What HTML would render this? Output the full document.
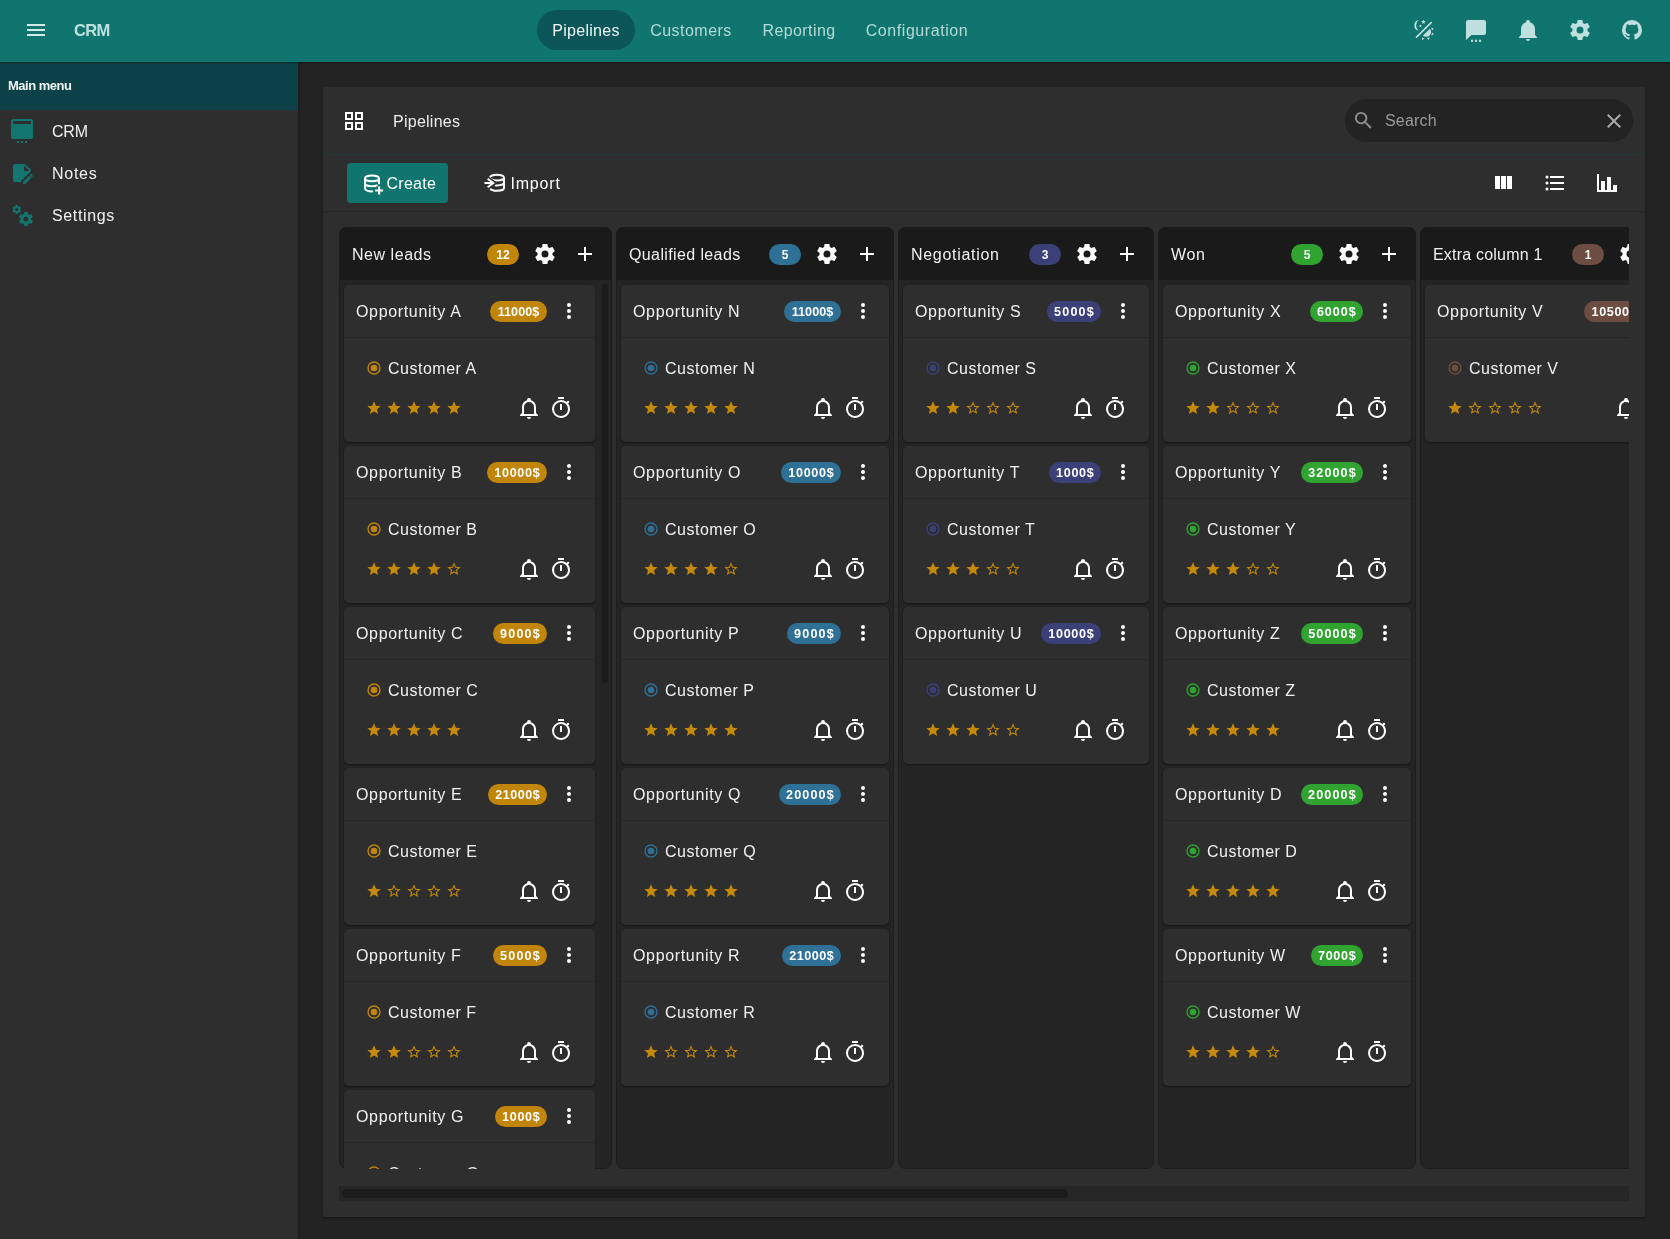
<!DOCTYPE html>
<html lang="en"><head><meta charset="utf-8"><title>CRM</title>
<style>
*{box-sizing:border-box;margin:0;padding:0}
html,body{width:1670px;height:1239px;overflow:hidden;background:#232323;font-family:"Liberation Sans",sans-serif;font-size:16px;color:#f1f1f1}
svg{display:block;flex:none}
.top,.side,.panel{will-change:transform}
.top{position:absolute;left:0;top:0;width:1670px;height:62px;background:#10756e;box-shadow:0 1px 2px rgba(0,0,0,.4);z-index:5;color:#bfe0de}
.top .menu{position:absolute;left:24px;top:18px;color:#d6ebe9}
.brand{position:absolute;left:74px;top:0;line-height:61px;font-size:16.5px;font-weight:700;color:#bfe0de;letter-spacing:-.7px}
.nav{position:absolute;left:537px;top:10px;height:40px;display:flex;color:#b4dad7}
.nav span{display:block;height:40px;line-height:42px;padding:0;text-align:center;border-radius:20px;white-space:nowrap}
.nav .active{background:#0c5559;color:#eef7f6}
.tools{position:absolute;left:1412px;top:18px;display:flex;gap:28px;color:#bfe0de}
.side{position:absolute;left:0;top:62px;width:298px;height:1177px;background:#2e2e2e;z-index:4;box-shadow:1px 0 3px rgba(0,0,0,.25)}
.sidehead{height:48px;line-height:47px;background:#0b4147;padding-left:8px;font-size:13px;font-weight:700;color:#f3f6f6;letter-spacing:-.5px}
.item{position:absolute;left:0;width:298px;height:42px;line-height:44px}
.item svg{position:absolute;left:10px;top:9px;color:#13756f}
.item span{position:absolute;left:52px;top:0;letter-spacing:.43px}
.panel{position:absolute;left:323px;top:87px;width:1322px;height:1130px;background:#2e2e2e;border-radius:3px;box-shadow:0 1px 3px rgba(0,0,0,.4)}
.titlerow{position:absolute;left:0;top:0;width:100%;height:68px;border-bottom:1px solid #24373b}
.gridic{position:absolute;left:19px;top:22px;color:#fff}
.ptitle{position:absolute;left:70px;top:0;line-height:70px;letter-spacing:.25px;color:#ececec}
.search{position:absolute;left:1022px;top:12px;width:288px;height:43px;border-radius:22px;background:#232323;color:#9c9c9c}
.search .mag{position:absolute;left:7px;top:9.5px;width:23px;height:23px;color:#8f8f8f}
.search span{position:absolute;left:40px;top:0;line-height:44px;letter-spacing:.2px}
.search .clr{position:absolute;left:257px;top:9.5px;color:#a9a9a9}
.toolbar{position:absolute;left:0;top:68px;width:100%;height:57px;border-bottom:1px solid #262626}
.btn{position:absolute;top:8px;height:40px;border-radius:4px;color:#fff}
.btn span{position:absolute;top:0;line-height:42px}
.create{left:24px;width:101px;background:#10756e}
.create svg{position:absolute;left:15px;top:8.5px}
.create span{left:39.5px;letter-spacing:.28px}
.import{left:146px;width:110px}
.import svg{position:absolute;left:14px;top:8px}
.import span{left:41.5px;letter-spacing:.8px}
.views{position:absolute;left:1168px;top:16px;display:flex;gap:28px;color:#fff}
.board{position:absolute;left:16px;top:140px;width:1290px;height:975px;overflow:hidden}
.cols{position:absolute;left:0;top:0;width:1290px;height:942px}
.col{position:absolute;top:0;height:942px;background:#242424;border-radius:8px;overflow:hidden;box-shadow:inset 0 0 0 1px rgba(0,0,0,.18)}
.colhead{position:absolute;left:0;top:0;width:100%;height:53px;background:#1a1a1a}
.coltitle{position:absolute;left:13px;top:0;line-height:56px;white-space:nowrap;letter-spacing:.45px}
.chip{display:block;height:21px;line-height:23px;border-radius:10.5px;font-size:12px;font-weight:700;color:#fff;text-align:center;white-space:nowrap}
.cnt{position:absolute;right:93px;top:17px;width:32px}
.hcog{position:absolute;right:55.5px;top:15px;color:#fff}
.hplus{position:absolute;right:15px;top:15px;color:#fff}
.colbody{position:absolute;left:5px;right:5px;top:58px}
.hasscroll .colbody{right:17px}
.vthumb{position:absolute;left:263px;top:57px;width:6px;height:399px;border-radius:3px;background:#1b1b1b}
.card{position:relative;height:157px;margin-bottom:4px;background:#2e2e2e;border-radius:5px;box-shadow:0 1px 2px rgba(0,0,0,.45)}
.chead{position:absolute;left:0;top:0;width:100%;height:53px;border-bottom:1px solid #262626}
.ctitle{position:absolute;left:12px;top:0;line-height:53px;white-space:nowrap;letter-spacing:.66px}
.chead .chip{position:absolute;right:48px;top:16px}
.dots{position:absolute;right:14px;top:14px;color:#fff}
.cbody{position:absolute;left:0;top:53px;width:100%;height:104px}
.cust{position:absolute;left:0;top:0;width:100%}
.radio{position:absolute;left:22px;top:22px}
.cust span{position:absolute;left:44px;top:19px;line-height:24px;white-space:nowrap;letter-spacing:.5px}
.crow{position:absolute;left:0;top:0;width:100%}
.stars{position:absolute;left:22px;top:62px;display:flex;gap:4px;color:#c58a0b}
.ib{position:absolute;right:54px;top:58px;color:#fff}
.it{position:absolute;right:22px;top:57.5px;color:#fff}
.amber{background:#c08509}.blue{background:#2e7096}.indigo{background:#3b4078}.green{background:#30a331}.brown{background:#6d4c41}
.c-amber{color:#c08509}.c-blue{color:#2e7096}.c-indigo{color:#3b4078}.c-green{color:#30a331}.c-brown{color:#6d4c41}
.htrack{position:absolute;left:0;top:959px;width:1290px;height:15px;background:#262626}
.hthumb{position:absolute;left:3px;top:3px;width:726px;height:9px;border-radius:4.5px;background:#1b1b1b}

</style></head>
<body>
<header class="top">
<svg class="menu" width="24" height="24" viewBox="0 0 24 24" fill="currentColor"><path d="M3,6H21V8H3V6M3,11H21V13H3V11M3,16H21V18H3V16Z"/></svg>
<span class="brand">CRM</span>
<nav class="nav"><span class="active" style="width:98px;letter-spacing:.29px">Pipelines</span><span style="width:112px;letter-spacing:.46px">Customers</span><span style="width:104px;letter-spacing:.41px">Reporting</span><span style="width:132px;letter-spacing:.57px">Configuration</span></nav>
<div class="tools"><svg width="24" height="24" viewBox="0 0 24 24" fill="currentColor"><path d="M4.5,19.1L19.2,4.65" stroke="currentColor" stroke-width="1.6" fill="none" stroke-linecap="round"/>
<path d="M6.9,2.1A5.4,5.4 0 0,0 7.1,12.8A6.5,6.5 0 0,1 6.9,2.1Z"/>
<path d="M11.40,1.45L11.99,3.09L13.73,3.14L12.35,4.21L12.84,5.88L11.40,4.90L9.96,5.88L10.45,4.21L9.07,3.14L10.81,3.09Z"/><path d="M8.40,6.30L8.82,7.42L10.02,7.47L9.08,8.22L9.40,9.38L8.40,8.72L7.40,9.38L7.72,8.22L6.78,7.47L7.98,7.42Z"/>
<path d="M17.86,10.64A4.9,4.9 0 0,1 10.94,17.56Z"/>
<path d="M21.72,10.21L20.34,12.52L19.03,10.05ZM21.90,16.60L19.28,17.20L20.16,14.54ZM16.88,21.91L14.85,20.14L17.52,19.29ZM10.10,22.01L9.96,19.32L12.42,20.66Z"/></svg><svg width="24" height="24" viewBox="0 0 24 24" fill="currentColor"><path d="M4,2H20A2,2 0 0,1 22,4V15A2,2 0 0,1 20,17H7.5L2,22V4A2,2 0 0,1 4,2Z"/>
<rect x="7" y="21.7" width="2.1" height="2.2"/><rect x="11" y="21.7" width="2.1" height="2.2"/><rect x="15" y="21.7" width="2.1" height="2.2"/></svg><svg width="24" height="24" viewBox="0 0 24 24" fill="currentColor"><path d="M21,19V20H3V19L5,17V11C5,7.9 7.03,5.17 10,4.29C10,4.19 10,4.1 10,4A2,2 0 0,1 12,2A2,2 0 0,1 14,4C14,4.1 14,4.19 14,4.29C16.97,5.17 19,7.9 19,11V17L21,19M14,21A2,2 0 0,1 12,23A2,2 0 0,1 10,21"/></svg><svg width="24" height="24" viewBox="0 0 24 24" fill="currentColor"><path d="M12,15.5A3.5,3.5 0 0,1 8.5,12A3.5,3.5 0 0,1 12,8.5A3.5,3.5 0 0,1 15.5,12A3.5,3.5 0 0,1 12,15.5M19.43,12.97C19.47,12.65 19.5,12.33 19.5,12C19.5,11.67 19.47,11.34 19.43,11L21.54,9.37C21.73,9.22 21.78,8.95 21.66,8.73L19.66,5.27C19.54,5.05 19.27,4.96 19.05,5.05L16.56,6.05C16.04,5.66 15.5,5.32 14.87,5.07L14.5,2.42C14.46,2.18 14.25,2 14,2H10C9.75,2 9.54,2.18 9.5,2.42L9.13,5.07C8.5,5.32 7.96,5.66 7.44,6.05L4.95,5.05C4.73,4.96 4.46,5.05 4.34,5.27L2.34,8.73C2.21,8.95 2.27,9.22 2.46,9.37L4.57,11C4.53,11.34 4.5,11.67 4.5,12C4.5,12.33 4.53,12.65 4.57,12.97L2.46,14.63C2.27,14.78 2.21,15.05 2.34,15.27L4.34,18.73C4.46,18.95 4.73,19.03 4.95,18.95L7.44,17.94C7.96,18.34 8.5,18.68 9.13,18.93L9.5,21.58C9.54,21.82 9.75,22 10,22H14C14.25,22 14.46,21.82 14.5,21.58L14.87,18.93C15.5,18.67 16.04,18.34 16.56,17.94L19.05,18.95C19.27,19.03 19.54,18.95 19.66,18.73L21.66,15.27C21.78,15.05 21.73,14.78 21.54,14.63L19.43,12.97Z"/></svg><svg width="24" height="24" viewBox="0 0 24 24" fill="currentColor"><path d="M12,2A10,10 0 0,0 2,12C2,16.42 4.87,20.17 8.84,21.5C9.34,21.58 9.5,21.27 9.5,21C9.5,20.77 9.5,20.14 9.5,19.31C6.73,19.91 6.14,17.97 6.14,17.97C5.68,16.81 5.03,16.5 5.03,16.5C4.12,15.88 5.1,15.9 5.1,15.9C6.1,15.97 6.63,16.93 6.63,16.93C7.5,18.45 8.97,18 9.54,17.76C9.63,17.11 9.89,16.67 10.17,16.42C7.95,16.17 5.62,15.31 5.62,11.5C5.62,10.39 6,9.5 6.65,8.79C6.55,8.54 6.2,7.5 6.75,6.15C6.75,6.15 7.59,5.88 9.5,7.17C10.29,6.95 11.15,6.84 12,6.84C12.85,6.84 13.71,6.95 14.5,7.17C16.41,5.88 17.25,6.15 17.25,6.15C17.8,7.5 17.45,8.54 17.35,8.79C18,9.5 18.38,10.39 18.38,11.5C18.38,15.32 16.04,16.16 13.81,16.41C14.17,16.72 14.5,17.33 14.5,18.26C14.5,19.6 14.5,20.68 14.5,21C14.5,21.27 14.66,21.59 15.17,21.5C19.14,20.16 22,16.42 22,12A10,10 0 0,0 12,2Z"/></svg></div>
</header>
<aside class="side">
<div class="sidehead">Main menu</div>
<div class="item" style="top:48px"><svg width="24" height="28" viewBox="0 0 24 28" fill="currentColor" style="top:7px"><path d="M21 2H3C1.9 2 1 2.9 1 4V20C1 21.1 1.9 22 3 22H21C22.1 22 23 21.1 23 20V4C23 2.9 22.1 2 21 2M21 7H3V4H21V7Z"/><rect x="7" y="24" width="2" height="2"/><rect x="11" y="24" width="2" height="2"/><rect x="15" y="24" width="2" height="2"/></svg><span style="letter-spacing:-.2px">CRM</span></div>
<div class="item" style="top:90px"><svg width="24" height="24" viewBox="0 0 24 24" fill="currentColor"><path d="M21 13.1C20.9 13.1 20.7 13.2 20.6 13.3L19.6 14.3L21.7 16.4L22.7 15.4C22.9 15.2 22.9 14.8 22.7 14.6L21.4 13.3C21.3 13.2 21.2 13.1 21 13.1M19.1 14.9L13 20.9V23H15.1L21.2 16.9L19.1 14.9M21 9L15 3H5C3.9 3 3 3.9 3 5V19C3 20.1 3.9 21 5 21H11V20.1L21 10.1V9M14 10V4.5L19.5 10H14Z"/></svg><span style="letter-spacing:.73px">Notes</span></div>
<div class="item" style="top:132px"><svg width="24" height="24" viewBox="0 0 24 24" fill="currentColor"><path d="M15.9,18.45C17.25,18.45 18.35,17.35 18.35,16C18.35,14.65 17.25,13.55 15.9,13.55C14.54,13.55 13.45,14.65 13.45,16C13.45,17.35 14.54,18.45 15.9,18.45M21.1,16.68L22.58,17.84C22.71,17.95 22.75,18.13 22.66,18.29L21.26,20.71C21.17,20.86 21,20.92 20.83,20.86L19.09,20.16C18.73,20.44 18.33,20.67 17.91,20.85L17.64,22.7C17.62,22.87 17.47,23 17.3,23H14.5C14.32,23 14.18,22.87 14.15,22.7L13.89,20.85C13.46,20.67 13.07,20.44 12.71,20.16L10.96,20.86C10.81,20.92 10.62,20.86 10.54,20.71L9.14,18.29C9.05,18.13 9.09,17.95 9.22,17.84L10.7,16.68L10.65,16L10.7,15.31L9.22,14.16C9.09,14.05 9.05,13.86 9.14,13.71L10.54,11.29C10.62,11.13 10.81,11.07 10.96,11.13L12.71,11.84C13.07,11.56 13.46,11.32 13.89,11.15L14.15,9.29C14.18,9.13 14.32,9 14.5,9H17.3C17.47,9 17.62,9.13 17.64,9.29L17.91,11.15C18.33,11.32 18.73,11.56 19.09,11.84L20.83,11.13C21,11.07 21.17,11.13 21.26,11.29L22.66,13.71C22.75,13.86 22.71,14.05 22.58,14.16L21.1,15.31L21.15,16L21.1,16.68M6.69,8.07C7.56,8.07 8.26,7.37 8.26,6.5C8.26,5.63 7.56,4.92 6.69,4.92A1.58,1.58 0 0,0 5.11,6.5C5.11,7.37 5.82,8.07 6.69,8.07M10.03,6.94L11,7.68C11.07,7.75 11.09,7.87 11.03,7.97L10.13,9.53C10.08,9.63 9.96,9.67 9.86,9.63L8.74,9.18L8,9.62L7.81,10.81C7.79,10.92 7.7,11 7.59,11H5.79C5.67,11 5.58,10.92 5.56,10.81L5.4,9.62L4.64,9.18L3.5,9.63C3.41,9.67 3.3,9.63 3.24,9.53L2.34,7.97C2.28,7.87 2.31,7.75 2.39,7.68L3.34,6.94L3.31,6.5L3.34,6.06L2.39,5.32C2.31,5.25 2.28,5.13 2.34,5.03L3.24,3.47C3.3,3.37 3.41,3.33 3.5,3.37L4.63,3.82L5.4,3.38L5.56,2.19C5.58,2.08 5.67,2 5.79,2H7.59C7.7,2 7.79,2.08 7.81,2.19L8,3.38L8.74,3.82L9.86,3.37C9.96,3.33 10.08,3.37 10.13,3.47L11.03,5.03C11.09,5.13 11.07,5.25 11,5.32L10.03,6.06L10.06,6.5L10.03,6.94Z"/></svg><span style="letter-spacing:.65px">Settings</span></div>
</aside>
<main class="panel">
<div class="titlerow"><svg class="gridic" width="24" height="24" viewBox="0 0 24 24" fill="currentColor"><path d="M3 11h8V3H3m2 2h4v4H5m8 12h8v-8h-8m2 2h4v4h-4M3 21h8v-8H3m2 2h4v4H5m8-16v8h8V3m-2 6h-4V5h4z"/></svg><span class="ptitle">Pipelines</span>
<div class="search"><svg class="mag" width="24" height="24" viewBox="0 0 24 24" fill="currentColor"><path d="M9.5,3A6.5,6.5 0 0,1 16,9.5C16,11.11 15.41,12.59 14.44,13.73L14.71,14H15.5L20.5,19L19,20.5L14,15.5V14.71L13.73,14.44C12.59,15.41 11.11,16 9.5,16A6.5,6.5 0 0,1 3,9.5A6.5,6.5 0 0,1 9.5,3M9.5,5C7,5 5,7 5,9.5C5,12 7,14 9.5,14C12,14 14,12 14,9.5C14,7 12,5 9.5,5Z"/></svg><span>Search</span><svg class="clr" width="24" height="24" viewBox="0 0 24 24" fill="currentColor"><path d="M19,6.41L17.59,5L12,10.59L6.41,5L5,6.41L10.59,12L5,17.59L6.41,19L12,13.41L17.59,19L19,17.59L13.41,12L19,6.41Z"/></svg></div></div>
<div class="toolbar"><div class="btn create"><svg width="24" height="24" viewBox="0 0 24 24" fill="none" stroke="currentColor" stroke-width="1.9"><ellipse cx="10" cy="6.4" rx="7" ry="2.9"/><path d="M3,6.4V16.5c0,1.6 3.1,2.95 7,2.95c.4,0 .8,-.01 1.1,-.04M17,6.4V12.3M3,11.4c0,1.6 3.1,2.9 7,2.9c2.2,0 4.2,-.45 5.5,-1.1"/><path d="M17.1,14.5v8M13.1,18.5h8" stroke-width="2.2"/></svg><span>Create</span></div><div class="btn import"><svg width="24" height="24" viewBox="0 0 24 24" fill="none" stroke="currentColor" stroke-width="1.9"><ellipse cx="14" cy="6.65" rx="7" ry="2.9"/><path d="M21,6.65V16.9M7.2,17.5c.7,1.35 3.4,2.3 6.8,2.3c3.9,0 7,-1.3 7,-2.9M11.8,14.35c.7,.1 1.4,.15 2.2,.15c3.9,0 7,-1.3 7,-2.9"/><path d="M4.6,7.8L10.4,12L4.6,16.3" stroke="#2e2e2e" stroke-width="5"/><path d="M1.5,12H10M4.6,7.8L10.4,12L4.6,16.3"/></svg>
<span>Import</span></div>
<div class="views"><svg width="24" height="24" viewBox="0 0 24 24" fill="currentColor"><path d="M16,5V18H21V5M4,18H9V5H4M10,18H15V5H10V18Z"/></svg><svg width="24" height="24" viewBox="0 0 24 24" fill="currentColor"><path d="M7,5H21V7H7V5M7,13V11H21V13H7M4,4.5A1.5,1.5 0 0,1 5.5,6A1.5,1.5 0 0,1 4,7.5A1.5,1.5 0 0,1 2.5,6A1.5,1.5 0 0,1 4,4.5M4,10.5A1.5,1.5 0 0,1 5.5,12A1.5,1.5 0 0,1 4,13.5A1.5,1.5 0 0,1 2.5,12A1.5,1.5 0 0,1 4,10.5M7,19V17H21V19H7M4,16.5A1.5,1.5 0 0,1 5.5,18A1.5,1.5 0 0,1 4,19.5A1.5,1.5 0 0,1 2.5,18A1.5,1.5 0 0,1 4,16.5Z"/></svg><svg width="24" height="24" viewBox="0 0 24 24" fill="currentColor"><path d="M22,21H2V3H4V19H6V10H10V19H12V6H16V19H18V14H22V21Z"/></svg></div></div>
<div class="board">
<div class="cols">
<div class="col hasscroll" style="left:0px;width:273px">
<div class="colhead"><span class="coltitle" style="letter-spacing:0.54px">New leads</span><span class="chip amber cnt">12</span><svg class="hcog" width="24" height="24" viewBox="0 0 24 24" fill="currentColor"><path d="M12,15.5A3.5,3.5 0 0,1 8.5,12A3.5,3.5 0 0,1 12,8.5A3.5,3.5 0 0,1 15.5,12A3.5,3.5 0 0,1 12,15.5M19.43,12.97C19.47,12.65 19.5,12.33 19.5,12C19.5,11.67 19.47,11.34 19.43,11L21.54,9.37C21.73,9.22 21.78,8.95 21.66,8.73L19.66,5.27C19.54,5.05 19.27,4.96 19.05,5.05L16.56,6.05C16.04,5.66 15.5,5.32 14.87,5.07L14.5,2.42C14.46,2.18 14.25,2 14,2H10C9.75,2 9.54,2.18 9.5,2.42L9.13,5.07C8.5,5.32 7.96,5.66 7.44,6.05L4.95,5.05C4.73,4.96 4.46,5.05 4.34,5.27L2.34,8.73C2.21,8.95 2.27,9.22 2.46,9.37L4.57,11C4.53,11.34 4.5,11.67 4.5,12C4.5,12.33 4.53,12.65 4.57,12.97L2.46,14.63C2.27,14.78 2.21,15.05 2.34,15.27L4.34,18.73C4.46,18.95 4.73,19.03 4.95,18.95L7.44,17.94C7.96,18.34 8.5,18.68 9.13,18.93L9.5,21.58C9.54,21.82 9.75,22 10,22H14C14.25,22 14.46,21.82 14.5,21.58L14.87,18.93C15.5,18.67 16.04,18.34 16.56,17.94L19.05,18.95C19.27,19.03 19.54,18.95 19.66,18.73L21.66,15.27C21.78,15.05 21.73,14.78 21.54,14.63L19.43,12.97Z"/></svg><svg class="hplus" width="24" height="24" viewBox="0 0 24 24" fill="currentColor"><path d="M19,13H13V19H11V13H5V11H11V5H13V11H19V13Z"/></svg></div>
<div class="colbody">
<div class="card">
<div class="chead"><span class="ctitle">Opportunity A</span><span class="chip amber" style="width:57px;font-size:12.6px;letter-spacing:0.07px;padding-left:0.07px">11000$</span><svg class="dots" width="24" height="24" viewBox="0 0 24 24" fill="currentColor"><path d="M12,16A2,2 0 0,1 14,18A2,2 0 0,1 12,20A2,2 0 0,1 10,18A2,2 0 0,1 12,16M12,10A2,2 0 0,1 14,12A2,2 0 0,1 12,14A2,2 0 0,1 10,12A2,2 0 0,1 12,10M12,4A2,2 0 0,1 14,6A2,2 0 0,1 12,8A2,2 0 0,1 10,6A2,2 0 0,1 12,4Z"/></svg></div>
<div class="cbody"><div class="cust"><svg class="radio c-amber" width="16" height="16" viewBox="0 0 24 24" fill="currentColor"><path d="M12,20A8,8 0 0,1 4,12A8,8 0 0,1 12,4A8,8 0 0,1 20,12A8,8 0 0,1 12,20M12,2A10,10 0 0,0 2,12A10,10 0 0,0 12,22A10,10 0 0,0 22,12A10,10 0 0,0 12,2M12,7A5,5 0 0,0 7,12A5,5 0 0,0 12,17A5,5 0 0,0 17,12A5,5 0 0,0 12,7Z"/></svg><span>Customer A</span></div>
<div class="crow"><div class="stars"><svg class="st" width="16" height="16" viewBox="0 0 24 24" fill="currentColor"><path d="M12,17.27L18.18,21L16.54,13.97L22,9.24L14.81,8.62L12,2L9.19,8.62L2,9.24L7.45,13.97L5.82,21L12,17.27Z"/></svg><svg class="st" width="16" height="16" viewBox="0 0 24 24" fill="currentColor"><path d="M12,17.27L18.18,21L16.54,13.97L22,9.24L14.81,8.62L12,2L9.19,8.62L2,9.24L7.45,13.97L5.82,21L12,17.27Z"/></svg><svg class="st" width="16" height="16" viewBox="0 0 24 24" fill="currentColor"><path d="M12,17.27L18.18,21L16.54,13.97L22,9.24L14.81,8.62L12,2L9.19,8.62L2,9.24L7.45,13.97L5.82,21L12,17.27Z"/></svg><svg class="st" width="16" height="16" viewBox="0 0 24 24" fill="currentColor"><path d="M12,17.27L18.18,21L16.54,13.97L22,9.24L14.81,8.62L12,2L9.19,8.62L2,9.24L7.45,13.97L5.82,21L12,17.27Z"/></svg><svg class="st" width="16" height="16" viewBox="0 0 24 24" fill="currentColor"><path d="M12,17.27L18.18,21L16.54,13.97L22,9.24L14.81,8.62L12,2L9.19,8.62L2,9.24L7.45,13.97L5.82,21L12,17.27Z"/></svg></div><svg class="ib" width="24" height="24" viewBox="0 0 24 24" fill="currentColor"><path d="M10,21H14A2,2 0 0,1 12,23A2,2 0 0,1 10,21M21,19V20H3V19L5,17V11C5,7.9 7.03,5.17 10,4.29C10,4.19 10,4.1 10,4A2,2 0 0,1 12,2A2,2 0 0,1 14,4C14,4.1 14,4.19 14,4.29C16.97,5.17 19,7.9 19,11V17L21,19M17,11A5,5 0 0,0 12,6A5,5 0 0,0 7,11V18H17V11Z"/></svg><svg class="it" width="24" height="24" viewBox="0 0 24 24" fill="currentColor"><path d="M12,20A7,7 0 0,1 5,13A7,7 0 0,1 12,6A7,7 0 0,1 19,13A7,7 0 0,1 12,20M19.03,7.39L20.45,5.97C20,5.46 19.55,5 19.04,4.56L17.62,6C16.07,4.74 14.12,4 12,4A9,9 0 0,0 3,13A9,9 0 0,0 12,22C17,22 21,17.97 21,13C21,10.88 20.26,8.93 19.03,7.39M11,14H13V8H11M15,1H9V3H15V1Z"/></svg></div></div>
</div>
<div class="card">
<div class="chead"><span class="ctitle">Opportunity B</span><span class="chip amber" style="width:60px;font-size:12.6px;letter-spacing:0.67px;padding-left:0.67px">10000$</span><svg class="dots" width="24" height="24" viewBox="0 0 24 24" fill="currentColor"><path d="M12,16A2,2 0 0,1 14,18A2,2 0 0,1 12,20A2,2 0 0,1 10,18A2,2 0 0,1 12,16M12,10A2,2 0 0,1 14,12A2,2 0 0,1 12,14A2,2 0 0,1 10,12A2,2 0 0,1 12,10M12,4A2,2 0 0,1 14,6A2,2 0 0,1 12,8A2,2 0 0,1 10,6A2,2 0 0,1 12,4Z"/></svg></div>
<div class="cbody"><div class="cust"><svg class="radio c-amber" width="16" height="16" viewBox="0 0 24 24" fill="currentColor"><path d="M12,20A8,8 0 0,1 4,12A8,8 0 0,1 12,4A8,8 0 0,1 20,12A8,8 0 0,1 12,20M12,2A10,10 0 0,0 2,12A10,10 0 0,0 12,22A10,10 0 0,0 22,12A10,10 0 0,0 12,2M12,7A5,5 0 0,0 7,12A5,5 0 0,0 12,17A5,5 0 0,0 17,12A5,5 0 0,0 12,7Z"/></svg><span>Customer B</span></div>
<div class="crow"><div class="stars"><svg class="st" width="16" height="16" viewBox="0 0 24 24" fill="currentColor"><path d="M12,17.27L18.18,21L16.54,13.97L22,9.24L14.81,8.62L12,2L9.19,8.62L2,9.24L7.45,13.97L5.82,21L12,17.27Z"/></svg><svg class="st" width="16" height="16" viewBox="0 0 24 24" fill="currentColor"><path d="M12,17.27L18.18,21L16.54,13.97L22,9.24L14.81,8.62L12,2L9.19,8.62L2,9.24L7.45,13.97L5.82,21L12,17.27Z"/></svg><svg class="st" width="16" height="16" viewBox="0 0 24 24" fill="currentColor"><path d="M12,17.27L18.18,21L16.54,13.97L22,9.24L14.81,8.62L12,2L9.19,8.62L2,9.24L7.45,13.97L5.82,21L12,17.27Z"/></svg><svg class="st" width="16" height="16" viewBox="0 0 24 24" fill="currentColor"><path d="M12,17.27L18.18,21L16.54,13.97L22,9.24L14.81,8.62L12,2L9.19,8.62L2,9.24L7.45,13.97L5.82,21L12,17.27Z"/></svg><svg class="st" width="16" height="16" viewBox="0 0 24 24" fill="currentColor"><path d="M12,15.39L8.24,17.66L9.23,13.38L5.91,10.5L10.29,10.13L12,6.09L13.71,10.13L18.09,10.5L14.77,13.38L15.76,17.66M22,9.24L14.81,8.63L12,2L9.19,8.63L2,9.24L7.45,13.97L5.82,21L12,17.27L18.18,21L16.54,13.97L22,9.24Z"/></svg></div><svg class="ib" width="24" height="24" viewBox="0 0 24 24" fill="currentColor"><path d="M10,21H14A2,2 0 0,1 12,23A2,2 0 0,1 10,21M21,19V20H3V19L5,17V11C5,7.9 7.03,5.17 10,4.29C10,4.19 10,4.1 10,4A2,2 0 0,1 12,2A2,2 0 0,1 14,4C14,4.1 14,4.19 14,4.29C16.97,5.17 19,7.9 19,11V17L21,19M17,11A5,5 0 0,0 12,6A5,5 0 0,0 7,11V18H17V11Z"/></svg><svg class="it" width="24" height="24" viewBox="0 0 24 24" fill="currentColor"><path d="M12,20A7,7 0 0,1 5,13A7,7 0 0,1 12,6A7,7 0 0,1 19,13A7,7 0 0,1 12,20M19.03,7.39L20.45,5.97C20,5.46 19.55,5 19.04,4.56L17.62,6C16.07,4.74 14.12,4 12,4A9,9 0 0,0 3,13A9,9 0 0,0 12,22C17,22 21,17.97 21,13C21,10.88 20.26,8.93 19.03,7.39M11,14H13V8H11M15,1H9V3H15V1Z"/></svg></div></div>
</div>
<div class="card">
<div class="chead"><span class="ctitle">Opportunity C</span><span class="chip amber" style="width:54.2px;font-size:12.6px;letter-spacing:1.14px;padding-left:1.14px">9000$</span><svg class="dots" width="24" height="24" viewBox="0 0 24 24" fill="currentColor"><path d="M12,16A2,2 0 0,1 14,18A2,2 0 0,1 12,20A2,2 0 0,1 10,18A2,2 0 0,1 12,16M12,10A2,2 0 0,1 14,12A2,2 0 0,1 12,14A2,2 0 0,1 10,12A2,2 0 0,1 12,10M12,4A2,2 0 0,1 14,6A2,2 0 0,1 12,8A2,2 0 0,1 10,6A2,2 0 0,1 12,4Z"/></svg></div>
<div class="cbody"><div class="cust"><svg class="radio c-amber" width="16" height="16" viewBox="0 0 24 24" fill="currentColor"><path d="M12,20A8,8 0 0,1 4,12A8,8 0 0,1 12,4A8,8 0 0,1 20,12A8,8 0 0,1 12,20M12,2A10,10 0 0,0 2,12A10,10 0 0,0 12,22A10,10 0 0,0 22,12A10,10 0 0,0 12,2M12,7A5,5 0 0,0 7,12A5,5 0 0,0 12,17A5,5 0 0,0 17,12A5,5 0 0,0 12,7Z"/></svg><span>Customer C</span></div>
<div class="crow"><div class="stars"><svg class="st" width="16" height="16" viewBox="0 0 24 24" fill="currentColor"><path d="M12,17.27L18.18,21L16.54,13.97L22,9.24L14.81,8.62L12,2L9.19,8.62L2,9.24L7.45,13.97L5.82,21L12,17.27Z"/></svg><svg class="st" width="16" height="16" viewBox="0 0 24 24" fill="currentColor"><path d="M12,17.27L18.18,21L16.54,13.97L22,9.24L14.81,8.62L12,2L9.19,8.62L2,9.24L7.45,13.97L5.82,21L12,17.27Z"/></svg><svg class="st" width="16" height="16" viewBox="0 0 24 24" fill="currentColor"><path d="M12,17.27L18.18,21L16.54,13.97L22,9.24L14.81,8.62L12,2L9.19,8.62L2,9.24L7.45,13.97L5.82,21L12,17.27Z"/></svg><svg class="st" width="16" height="16" viewBox="0 0 24 24" fill="currentColor"><path d="M12,17.27L18.18,21L16.54,13.97L22,9.24L14.81,8.62L12,2L9.19,8.62L2,9.24L7.45,13.97L5.82,21L12,17.27Z"/></svg><svg class="st" width="16" height="16" viewBox="0 0 24 24" fill="currentColor"><path d="M12,17.27L18.18,21L16.54,13.97L22,9.24L14.81,8.62L12,2L9.19,8.62L2,9.24L7.45,13.97L5.82,21L12,17.27Z"/></svg></div><svg class="ib" width="24" height="24" viewBox="0 0 24 24" fill="currentColor"><path d="M10,21H14A2,2 0 0,1 12,23A2,2 0 0,1 10,21M21,19V20H3V19L5,17V11C5,7.9 7.03,5.17 10,4.29C10,4.19 10,4.1 10,4A2,2 0 0,1 12,2A2,2 0 0,1 14,4C14,4.1 14,4.19 14,4.29C16.97,5.17 19,7.9 19,11V17L21,19M17,11A5,5 0 0,0 12,6A5,5 0 0,0 7,11V18H17V11Z"/></svg><svg class="it" width="24" height="24" viewBox="0 0 24 24" fill="currentColor"><path d="M12,20A7,7 0 0,1 5,13A7,7 0 0,1 12,6A7,7 0 0,1 19,13A7,7 0 0,1 12,20M19.03,7.39L20.45,5.97C20,5.46 19.55,5 19.04,4.56L17.62,6C16.07,4.74 14.12,4 12,4A9,9 0 0,0 3,13A9,9 0 0,0 12,22C17,22 21,17.97 21,13C21,10.88 20.26,8.93 19.03,7.39M11,14H13V8H11M15,1H9V3H15V1Z"/></svg></div></div>
</div>
<div class="card">
<div class="chead"><span class="ctitle">Opportunity E</span><span class="chip amber" style="width:59px;font-size:12.6px;letter-spacing:0.47px;padding-left:0.47px">21000$</span><svg class="dots" width="24" height="24" viewBox="0 0 24 24" fill="currentColor"><path d="M12,16A2,2 0 0,1 14,18A2,2 0 0,1 12,20A2,2 0 0,1 10,18A2,2 0 0,1 12,16M12,10A2,2 0 0,1 14,12A2,2 0 0,1 12,14A2,2 0 0,1 10,12A2,2 0 0,1 12,10M12,4A2,2 0 0,1 14,6A2,2 0 0,1 12,8A2,2 0 0,1 10,6A2,2 0 0,1 12,4Z"/></svg></div>
<div class="cbody"><div class="cust"><svg class="radio c-amber" width="16" height="16" viewBox="0 0 24 24" fill="currentColor"><path d="M12,20A8,8 0 0,1 4,12A8,8 0 0,1 12,4A8,8 0 0,1 20,12A8,8 0 0,1 12,20M12,2A10,10 0 0,0 2,12A10,10 0 0,0 12,22A10,10 0 0,0 22,12A10,10 0 0,0 12,2M12,7A5,5 0 0,0 7,12A5,5 0 0,0 12,17A5,5 0 0,0 17,12A5,5 0 0,0 12,7Z"/></svg><span>Customer E</span></div>
<div class="crow"><div class="stars"><svg class="st" width="16" height="16" viewBox="0 0 24 24" fill="currentColor"><path d="M12,17.27L18.18,21L16.54,13.97L22,9.24L14.81,8.62L12,2L9.19,8.62L2,9.24L7.45,13.97L5.82,21L12,17.27Z"/></svg><svg class="st" width="16" height="16" viewBox="0 0 24 24" fill="currentColor"><path d="M12,15.39L8.24,17.66L9.23,13.38L5.91,10.5L10.29,10.13L12,6.09L13.71,10.13L18.09,10.5L14.77,13.38L15.76,17.66M22,9.24L14.81,8.63L12,2L9.19,8.63L2,9.24L7.45,13.97L5.82,21L12,17.27L18.18,21L16.54,13.97L22,9.24Z"/></svg><svg class="st" width="16" height="16" viewBox="0 0 24 24" fill="currentColor"><path d="M12,15.39L8.24,17.66L9.23,13.38L5.91,10.5L10.29,10.13L12,6.09L13.71,10.13L18.09,10.5L14.77,13.38L15.76,17.66M22,9.24L14.81,8.63L12,2L9.19,8.63L2,9.24L7.45,13.97L5.82,21L12,17.27L18.18,21L16.54,13.97L22,9.24Z"/></svg><svg class="st" width="16" height="16" viewBox="0 0 24 24" fill="currentColor"><path d="M12,15.39L8.24,17.66L9.23,13.38L5.91,10.5L10.29,10.13L12,6.09L13.71,10.13L18.09,10.5L14.77,13.38L15.76,17.66M22,9.24L14.81,8.63L12,2L9.19,8.63L2,9.24L7.45,13.97L5.82,21L12,17.27L18.18,21L16.54,13.97L22,9.24Z"/></svg><svg class="st" width="16" height="16" viewBox="0 0 24 24" fill="currentColor"><path d="M12,15.39L8.24,17.66L9.23,13.38L5.91,10.5L10.29,10.13L12,6.09L13.71,10.13L18.09,10.5L14.77,13.38L15.76,17.66M22,9.24L14.81,8.63L12,2L9.19,8.63L2,9.24L7.45,13.97L5.82,21L12,17.27L18.18,21L16.54,13.97L22,9.24Z"/></svg></div><svg class="ib" width="24" height="24" viewBox="0 0 24 24" fill="currentColor"><path d="M10,21H14A2,2 0 0,1 12,23A2,2 0 0,1 10,21M21,19V20H3V19L5,17V11C5,7.9 7.03,5.17 10,4.29C10,4.19 10,4.1 10,4A2,2 0 0,1 12,2A2,2 0 0,1 14,4C14,4.1 14,4.19 14,4.29C16.97,5.17 19,7.9 19,11V17L21,19M17,11A5,5 0 0,0 12,6A5,5 0 0,0 7,11V18H17V11Z"/></svg><svg class="it" width="24" height="24" viewBox="0 0 24 24" fill="currentColor"><path d="M12,20A7,7 0 0,1 5,13A7,7 0 0,1 12,6A7,7 0 0,1 19,13A7,7 0 0,1 12,20M19.03,7.39L20.45,5.97C20,5.46 19.55,5 19.04,4.56L17.62,6C16.07,4.74 14.12,4 12,4A9,9 0 0,0 3,13A9,9 0 0,0 12,22C17,22 21,17.97 21,13C21,10.88 20.26,8.93 19.03,7.39M11,14H13V8H11M15,1H9V3H15V1Z"/></svg></div></div>
</div>
<div class="card">
<div class="chead"><span class="ctitle">Opportunity F</span><span class="chip amber" style="width:54.2px;font-size:12.6px;letter-spacing:1.14px;padding-left:1.14px">5000$</span><svg class="dots" width="24" height="24" viewBox="0 0 24 24" fill="currentColor"><path d="M12,16A2,2 0 0,1 14,18A2,2 0 0,1 12,20A2,2 0 0,1 10,18A2,2 0 0,1 12,16M12,10A2,2 0 0,1 14,12A2,2 0 0,1 12,14A2,2 0 0,1 10,12A2,2 0 0,1 12,10M12,4A2,2 0 0,1 14,6A2,2 0 0,1 12,8A2,2 0 0,1 10,6A2,2 0 0,1 12,4Z"/></svg></div>
<div class="cbody"><div class="cust"><svg class="radio c-amber" width="16" height="16" viewBox="0 0 24 24" fill="currentColor"><path d="M12,20A8,8 0 0,1 4,12A8,8 0 0,1 12,4A8,8 0 0,1 20,12A8,8 0 0,1 12,20M12,2A10,10 0 0,0 2,12A10,10 0 0,0 12,22A10,10 0 0,0 22,12A10,10 0 0,0 12,2M12,7A5,5 0 0,0 7,12A5,5 0 0,0 12,17A5,5 0 0,0 17,12A5,5 0 0,0 12,7Z"/></svg><span>Customer F</span></div>
<div class="crow"><div class="stars"><svg class="st" width="16" height="16" viewBox="0 0 24 24" fill="currentColor"><path d="M12,17.27L18.18,21L16.54,13.97L22,9.24L14.81,8.62L12,2L9.19,8.62L2,9.24L7.45,13.97L5.82,21L12,17.27Z"/></svg><svg class="st" width="16" height="16" viewBox="0 0 24 24" fill="currentColor"><path d="M12,17.27L18.18,21L16.54,13.97L22,9.24L14.81,8.62L12,2L9.19,8.62L2,9.24L7.45,13.97L5.82,21L12,17.27Z"/></svg><svg class="st" width="16" height="16" viewBox="0 0 24 24" fill="currentColor"><path d="M12,15.39L8.24,17.66L9.23,13.38L5.91,10.5L10.29,10.13L12,6.09L13.71,10.13L18.09,10.5L14.77,13.38L15.76,17.66M22,9.24L14.81,8.63L12,2L9.19,8.63L2,9.24L7.45,13.97L5.82,21L12,17.27L18.18,21L16.54,13.97L22,9.24Z"/></svg><svg class="st" width="16" height="16" viewBox="0 0 24 24" fill="currentColor"><path d="M12,15.39L8.24,17.66L9.23,13.38L5.91,10.5L10.29,10.13L12,6.09L13.71,10.13L18.09,10.5L14.77,13.38L15.76,17.66M22,9.24L14.81,8.63L12,2L9.19,8.63L2,9.24L7.45,13.97L5.82,21L12,17.27L18.18,21L16.54,13.97L22,9.24Z"/></svg><svg class="st" width="16" height="16" viewBox="0 0 24 24" fill="currentColor"><path d="M12,15.39L8.24,17.66L9.23,13.38L5.91,10.5L10.29,10.13L12,6.09L13.71,10.13L18.09,10.5L14.77,13.38L15.76,17.66M22,9.24L14.81,8.63L12,2L9.19,8.63L2,9.24L7.45,13.97L5.82,21L12,17.27L18.18,21L16.54,13.97L22,9.24Z"/></svg></div><svg class="ib" width="24" height="24" viewBox="0 0 24 24" fill="currentColor"><path d="M10,21H14A2,2 0 0,1 12,23A2,2 0 0,1 10,21M21,19V20H3V19L5,17V11C5,7.9 7.03,5.17 10,4.29C10,4.19 10,4.1 10,4A2,2 0 0,1 12,2A2,2 0 0,1 14,4C14,4.1 14,4.19 14,4.29C16.97,5.17 19,7.9 19,11V17L21,19M17,11A5,5 0 0,0 12,6A5,5 0 0,0 7,11V18H17V11Z"/></svg><svg class="it" width="24" height="24" viewBox="0 0 24 24" fill="currentColor"><path d="M12,20A7,7 0 0,1 5,13A7,7 0 0,1 12,6A7,7 0 0,1 19,13A7,7 0 0,1 12,20M19.03,7.39L20.45,5.97C20,5.46 19.55,5 19.04,4.56L17.62,6C16.07,4.74 14.12,4 12,4A9,9 0 0,0 3,13A9,9 0 0,0 12,22C17,22 21,17.97 21,13C21,10.88 20.26,8.93 19.03,7.39M11,14H13V8H11M15,1H9V3H15V1Z"/></svg></div></div>
</div>
<div class="card">
<div class="chead"><span class="ctitle">Opportunity G</span><span class="chip amber" style="width:52.2px;font-size:12.6px;letter-spacing:0.64px;padding-left:0.64px">1000$</span><svg class="dots" width="24" height="24" viewBox="0 0 24 24" fill="currentColor"><path d="M12,16A2,2 0 0,1 14,18A2,2 0 0,1 12,20A2,2 0 0,1 10,18A2,2 0 0,1 12,16M12,10A2,2 0 0,1 14,12A2,2 0 0,1 12,14A2,2 0 0,1 10,12A2,2 0 0,1 12,10M12,4A2,2 0 0,1 14,6A2,2 0 0,1 12,8A2,2 0 0,1 10,6A2,2 0 0,1 12,4Z"/></svg></div>
<div class="cbody"><div class="cust"><svg class="radio c-amber" width="16" height="16" viewBox="0 0 24 24" fill="currentColor"><path d="M12,20A8,8 0 0,1 4,12A8,8 0 0,1 12,4A8,8 0 0,1 20,12A8,8 0 0,1 12,20M12,2A10,10 0 0,0 2,12A10,10 0 0,0 12,22A10,10 0 0,0 22,12A10,10 0 0,0 12,2M12,7A5,5 0 0,0 7,12A5,5 0 0,0 12,17A5,5 0 0,0 17,12A5,5 0 0,0 12,7Z"/></svg><span>Customer G</span></div>
<div class="crow"><div class="stars"><svg class="st" width="16" height="16" viewBox="0 0 24 24" fill="currentColor"><path d="M12,17.27L18.18,21L16.54,13.97L22,9.24L14.81,8.62L12,2L9.19,8.62L2,9.24L7.45,13.97L5.82,21L12,17.27Z"/></svg><svg class="st" width="16" height="16" viewBox="0 0 24 24" fill="currentColor"><path d="M12,17.27L18.18,21L16.54,13.97L22,9.24L14.81,8.62L12,2L9.19,8.62L2,9.24L7.45,13.97L5.82,21L12,17.27Z"/></svg><svg class="st" width="16" height="16" viewBox="0 0 24 24" fill="currentColor"><path d="M12,15.39L8.24,17.66L9.23,13.38L5.91,10.5L10.29,10.13L12,6.09L13.71,10.13L18.09,10.5L14.77,13.38L15.76,17.66M22,9.24L14.81,8.63L12,2L9.19,8.63L2,9.24L7.45,13.97L5.82,21L12,17.27L18.18,21L16.54,13.97L22,9.24Z"/></svg><svg class="st" width="16" height="16" viewBox="0 0 24 24" fill="currentColor"><path d="M12,15.39L8.24,17.66L9.23,13.38L5.91,10.5L10.29,10.13L12,6.09L13.71,10.13L18.09,10.5L14.77,13.38L15.76,17.66M22,9.24L14.81,8.63L12,2L9.19,8.63L2,9.24L7.45,13.97L5.82,21L12,17.27L18.18,21L16.54,13.97L22,9.24Z"/></svg><svg class="st" width="16" height="16" viewBox="0 0 24 24" fill="currentColor"><path d="M12,15.39L8.24,17.66L9.23,13.38L5.91,10.5L10.29,10.13L12,6.09L13.71,10.13L18.09,10.5L14.77,13.38L15.76,17.66M22,9.24L14.81,8.63L12,2L9.19,8.63L2,9.24L7.45,13.97L5.82,21L12,17.27L18.18,21L16.54,13.97L22,9.24Z"/></svg></div><svg class="ib" width="24" height="24" viewBox="0 0 24 24" fill="currentColor"><path d="M10,21H14A2,2 0 0,1 12,23A2,2 0 0,1 10,21M21,19V20H3V19L5,17V11C5,7.9 7.03,5.17 10,4.29C10,4.19 10,4.1 10,4A2,2 0 0,1 12,2A2,2 0 0,1 14,4C14,4.1 14,4.19 14,4.29C16.97,5.17 19,7.9 19,11V17L21,19M17,11A5,5 0 0,0 12,6A5,5 0 0,0 7,11V18H17V11Z"/></svg><svg class="it" width="24" height="24" viewBox="0 0 24 24" fill="currentColor"><path d="M12,20A7,7 0 0,1 5,13A7,7 0 0,1 12,6A7,7 0 0,1 19,13A7,7 0 0,1 12,20M19.03,7.39L20.45,5.97C20,5.46 19.55,5 19.04,4.56L17.62,6C16.07,4.74 14.12,4 12,4A9,9 0 0,0 3,13A9,9 0 0,0 12,22C17,22 21,17.97 21,13C21,10.88 20.26,8.93 19.03,7.39M11,14H13V8H11M15,1H9V3H15V1Z"/></svg></div></div>
</div>
</div><div class="vthumb"></div>
</div><div class="col" style="left:277px;width:278px">
<div class="colhead"><span class="coltitle" style="letter-spacing:0.38px">Qualified leads</span><span class="chip blue cnt">5</span><svg class="hcog" width="24" height="24" viewBox="0 0 24 24" fill="currentColor"><path d="M12,15.5A3.5,3.5 0 0,1 8.5,12A3.5,3.5 0 0,1 12,8.5A3.5,3.5 0 0,1 15.5,12A3.5,3.5 0 0,1 12,15.5M19.43,12.97C19.47,12.65 19.5,12.33 19.5,12C19.5,11.67 19.47,11.34 19.43,11L21.54,9.37C21.73,9.22 21.78,8.95 21.66,8.73L19.66,5.27C19.54,5.05 19.27,4.96 19.05,5.05L16.56,6.05C16.04,5.66 15.5,5.32 14.87,5.07L14.5,2.42C14.46,2.18 14.25,2 14,2H10C9.75,2 9.54,2.18 9.5,2.42L9.13,5.07C8.5,5.32 7.96,5.66 7.44,6.05L4.95,5.05C4.73,4.96 4.46,5.05 4.34,5.27L2.34,8.73C2.21,8.95 2.27,9.22 2.46,9.37L4.57,11C4.53,11.34 4.5,11.67 4.5,12C4.5,12.33 4.53,12.65 4.57,12.97L2.46,14.63C2.27,14.78 2.21,15.05 2.34,15.27L4.34,18.73C4.46,18.95 4.73,19.03 4.95,18.95L7.44,17.94C7.96,18.34 8.5,18.68 9.13,18.93L9.5,21.58C9.54,21.82 9.75,22 10,22H14C14.25,22 14.46,21.82 14.5,21.58L14.87,18.93C15.5,18.67 16.04,18.34 16.56,17.94L19.05,18.95C19.27,19.03 19.54,18.95 19.66,18.73L21.66,15.27C21.78,15.05 21.73,14.78 21.54,14.63L19.43,12.97Z"/></svg><svg class="hplus" width="24" height="24" viewBox="0 0 24 24" fill="currentColor"><path d="M19,13H13V19H11V13H5V11H11V5H13V11H19V13Z"/></svg></div>
<div class="colbody">
<div class="card">
<div class="chead"><span class="ctitle">Opportunity N</span><span class="chip blue" style="width:57px;font-size:12.6px;letter-spacing:0.07px;padding-left:0.07px">11000$</span><svg class="dots" width="24" height="24" viewBox="0 0 24 24" fill="currentColor"><path d="M12,16A2,2 0 0,1 14,18A2,2 0 0,1 12,20A2,2 0 0,1 10,18A2,2 0 0,1 12,16M12,10A2,2 0 0,1 14,12A2,2 0 0,1 12,14A2,2 0 0,1 10,12A2,2 0 0,1 12,10M12,4A2,2 0 0,1 14,6A2,2 0 0,1 12,8A2,2 0 0,1 10,6A2,2 0 0,1 12,4Z"/></svg></div>
<div class="cbody"><div class="cust"><svg class="radio c-blue" width="16" height="16" viewBox="0 0 24 24" fill="currentColor"><path d="M12,20A8,8 0 0,1 4,12A8,8 0 0,1 12,4A8,8 0 0,1 20,12A8,8 0 0,1 12,20M12,2A10,10 0 0,0 2,12A10,10 0 0,0 12,22A10,10 0 0,0 22,12A10,10 0 0,0 12,2M12,7A5,5 0 0,0 7,12A5,5 0 0,0 12,17A5,5 0 0,0 17,12A5,5 0 0,0 12,7Z"/></svg><span>Customer N</span></div>
<div class="crow"><div class="stars"><svg class="st" width="16" height="16" viewBox="0 0 24 24" fill="currentColor"><path d="M12,17.27L18.18,21L16.54,13.97L22,9.24L14.81,8.62L12,2L9.19,8.62L2,9.24L7.45,13.97L5.82,21L12,17.27Z"/></svg><svg class="st" width="16" height="16" viewBox="0 0 24 24" fill="currentColor"><path d="M12,17.27L18.18,21L16.54,13.97L22,9.24L14.81,8.62L12,2L9.19,8.62L2,9.24L7.45,13.97L5.82,21L12,17.27Z"/></svg><svg class="st" width="16" height="16" viewBox="0 0 24 24" fill="currentColor"><path d="M12,17.27L18.18,21L16.54,13.97L22,9.24L14.81,8.62L12,2L9.19,8.62L2,9.24L7.45,13.97L5.82,21L12,17.27Z"/></svg><svg class="st" width="16" height="16" viewBox="0 0 24 24" fill="currentColor"><path d="M12,17.27L18.18,21L16.54,13.97L22,9.24L14.81,8.62L12,2L9.19,8.62L2,9.24L7.45,13.97L5.82,21L12,17.27Z"/></svg><svg class="st" width="16" height="16" viewBox="0 0 24 24" fill="currentColor"><path d="M12,17.27L18.18,21L16.54,13.97L22,9.24L14.81,8.62L12,2L9.19,8.62L2,9.24L7.45,13.97L5.82,21L12,17.27Z"/></svg></div><svg class="ib" width="24" height="24" viewBox="0 0 24 24" fill="currentColor"><path d="M10,21H14A2,2 0 0,1 12,23A2,2 0 0,1 10,21M21,19V20H3V19L5,17V11C5,7.9 7.03,5.17 10,4.29C10,4.19 10,4.1 10,4A2,2 0 0,1 12,2A2,2 0 0,1 14,4C14,4.1 14,4.19 14,4.29C16.97,5.17 19,7.9 19,11V17L21,19M17,11A5,5 0 0,0 12,6A5,5 0 0,0 7,11V18H17V11Z"/></svg><svg class="it" width="24" height="24" viewBox="0 0 24 24" fill="currentColor"><path d="M12,20A7,7 0 0,1 5,13A7,7 0 0,1 12,6A7,7 0 0,1 19,13A7,7 0 0,1 12,20M19.03,7.39L20.45,5.97C20,5.46 19.55,5 19.04,4.56L17.62,6C16.07,4.74 14.12,4 12,4A9,9 0 0,0 3,13A9,9 0 0,0 12,22C17,22 21,17.97 21,13C21,10.88 20.26,8.93 19.03,7.39M11,14H13V8H11M15,1H9V3H15V1Z"/></svg></div></div>
</div>
<div class="card">
<div class="chead"><span class="ctitle">Opportunity O</span><span class="chip blue" style="width:60px;font-size:12.6px;letter-spacing:0.67px;padding-left:0.67px">10000$</span><svg class="dots" width="24" height="24" viewBox="0 0 24 24" fill="currentColor"><path d="M12,16A2,2 0 0,1 14,18A2,2 0 0,1 12,20A2,2 0 0,1 10,18A2,2 0 0,1 12,16M12,10A2,2 0 0,1 14,12A2,2 0 0,1 12,14A2,2 0 0,1 10,12A2,2 0 0,1 12,10M12,4A2,2 0 0,1 14,6A2,2 0 0,1 12,8A2,2 0 0,1 10,6A2,2 0 0,1 12,4Z"/></svg></div>
<div class="cbody"><div class="cust"><svg class="radio c-blue" width="16" height="16" viewBox="0 0 24 24" fill="currentColor"><path d="M12,20A8,8 0 0,1 4,12A8,8 0 0,1 12,4A8,8 0 0,1 20,12A8,8 0 0,1 12,20M12,2A10,10 0 0,0 2,12A10,10 0 0,0 12,22A10,10 0 0,0 22,12A10,10 0 0,0 12,2M12,7A5,5 0 0,0 7,12A5,5 0 0,0 12,17A5,5 0 0,0 17,12A5,5 0 0,0 12,7Z"/></svg><span>Customer O</span></div>
<div class="crow"><div class="stars"><svg class="st" width="16" height="16" viewBox="0 0 24 24" fill="currentColor"><path d="M12,17.27L18.18,21L16.54,13.97L22,9.24L14.81,8.62L12,2L9.19,8.62L2,9.24L7.45,13.97L5.82,21L12,17.27Z"/></svg><svg class="st" width="16" height="16" viewBox="0 0 24 24" fill="currentColor"><path d="M12,17.27L18.18,21L16.54,13.97L22,9.24L14.81,8.62L12,2L9.19,8.62L2,9.24L7.45,13.97L5.82,21L12,17.27Z"/></svg><svg class="st" width="16" height="16" viewBox="0 0 24 24" fill="currentColor"><path d="M12,17.27L18.18,21L16.54,13.97L22,9.24L14.81,8.62L12,2L9.19,8.62L2,9.24L7.45,13.97L5.82,21L12,17.27Z"/></svg><svg class="st" width="16" height="16" viewBox="0 0 24 24" fill="currentColor"><path d="M12,17.27L18.18,21L16.54,13.97L22,9.24L14.81,8.62L12,2L9.19,8.62L2,9.24L7.45,13.97L5.82,21L12,17.27Z"/></svg><svg class="st" width="16" height="16" viewBox="0 0 24 24" fill="currentColor"><path d="M12,15.39L8.24,17.66L9.23,13.38L5.91,10.5L10.29,10.13L12,6.09L13.71,10.13L18.09,10.5L14.77,13.38L15.76,17.66M22,9.24L14.81,8.63L12,2L9.19,8.63L2,9.24L7.45,13.97L5.82,21L12,17.27L18.18,21L16.54,13.97L22,9.24Z"/></svg></div><svg class="ib" width="24" height="24" viewBox="0 0 24 24" fill="currentColor"><path d="M10,21H14A2,2 0 0,1 12,23A2,2 0 0,1 10,21M21,19V20H3V19L5,17V11C5,7.9 7.03,5.17 10,4.29C10,4.19 10,4.1 10,4A2,2 0 0,1 12,2A2,2 0 0,1 14,4C14,4.1 14,4.19 14,4.29C16.97,5.17 19,7.9 19,11V17L21,19M17,11A5,5 0 0,0 12,6A5,5 0 0,0 7,11V18H17V11Z"/></svg><svg class="it" width="24" height="24" viewBox="0 0 24 24" fill="currentColor"><path d="M12,20A7,7 0 0,1 5,13A7,7 0 0,1 12,6A7,7 0 0,1 19,13A7,7 0 0,1 12,20M19.03,7.39L20.45,5.97C20,5.46 19.55,5 19.04,4.56L17.62,6C16.07,4.74 14.12,4 12,4A9,9 0 0,0 3,13A9,9 0 0,0 12,22C17,22 21,17.97 21,13C21,10.88 20.26,8.93 19.03,7.39M11,14H13V8H11M15,1H9V3H15V1Z"/></svg></div></div>
</div>
<div class="card">
<div class="chead"><span class="ctitle">Opportunity P</span><span class="chip blue" style="width:54.2px;font-size:12.6px;letter-spacing:1.14px;padding-left:1.14px">9000$</span><svg class="dots" width="24" height="24" viewBox="0 0 24 24" fill="currentColor"><path d="M12,16A2,2 0 0,1 14,18A2,2 0 0,1 12,20A2,2 0 0,1 10,18A2,2 0 0,1 12,16M12,10A2,2 0 0,1 14,12A2,2 0 0,1 12,14A2,2 0 0,1 10,12A2,2 0 0,1 12,10M12,4A2,2 0 0,1 14,6A2,2 0 0,1 12,8A2,2 0 0,1 10,6A2,2 0 0,1 12,4Z"/></svg></div>
<div class="cbody"><div class="cust"><svg class="radio c-blue" width="16" height="16" viewBox="0 0 24 24" fill="currentColor"><path d="M12,20A8,8 0 0,1 4,12A8,8 0 0,1 12,4A8,8 0 0,1 20,12A8,8 0 0,1 12,20M12,2A10,10 0 0,0 2,12A10,10 0 0,0 12,22A10,10 0 0,0 22,12A10,10 0 0,0 12,2M12,7A5,5 0 0,0 7,12A5,5 0 0,0 12,17A5,5 0 0,0 17,12A5,5 0 0,0 12,7Z"/></svg><span>Customer P</span></div>
<div class="crow"><div class="stars"><svg class="st" width="16" height="16" viewBox="0 0 24 24" fill="currentColor"><path d="M12,17.27L18.18,21L16.54,13.97L22,9.24L14.81,8.62L12,2L9.19,8.62L2,9.24L7.45,13.97L5.82,21L12,17.27Z"/></svg><svg class="st" width="16" height="16" viewBox="0 0 24 24" fill="currentColor"><path d="M12,17.27L18.18,21L16.54,13.97L22,9.24L14.81,8.62L12,2L9.19,8.62L2,9.24L7.45,13.97L5.82,21L12,17.27Z"/></svg><svg class="st" width="16" height="16" viewBox="0 0 24 24" fill="currentColor"><path d="M12,17.27L18.18,21L16.54,13.97L22,9.24L14.81,8.62L12,2L9.19,8.62L2,9.24L7.45,13.97L5.82,21L12,17.27Z"/></svg><svg class="st" width="16" height="16" viewBox="0 0 24 24" fill="currentColor"><path d="M12,17.27L18.18,21L16.54,13.97L22,9.24L14.81,8.62L12,2L9.19,8.62L2,9.24L7.45,13.97L5.82,21L12,17.27Z"/></svg><svg class="st" width="16" height="16" viewBox="0 0 24 24" fill="currentColor"><path d="M12,17.27L18.18,21L16.54,13.97L22,9.24L14.81,8.62L12,2L9.19,8.62L2,9.24L7.45,13.97L5.82,21L12,17.27Z"/></svg></div><svg class="ib" width="24" height="24" viewBox="0 0 24 24" fill="currentColor"><path d="M10,21H14A2,2 0 0,1 12,23A2,2 0 0,1 10,21M21,19V20H3V19L5,17V11C5,7.9 7.03,5.17 10,4.29C10,4.19 10,4.1 10,4A2,2 0 0,1 12,2A2,2 0 0,1 14,4C14,4.1 14,4.19 14,4.29C16.97,5.17 19,7.9 19,11V17L21,19M17,11A5,5 0 0,0 12,6A5,5 0 0,0 7,11V18H17V11Z"/></svg><svg class="it" width="24" height="24" viewBox="0 0 24 24" fill="currentColor"><path d="M12,20A7,7 0 0,1 5,13A7,7 0 0,1 12,6A7,7 0 0,1 19,13A7,7 0 0,1 12,20M19.03,7.39L20.45,5.97C20,5.46 19.55,5 19.04,4.56L17.62,6C16.07,4.74 14.12,4 12,4A9,9 0 0,0 3,13A9,9 0 0,0 12,22C17,22 21,17.97 21,13C21,10.88 20.26,8.93 19.03,7.39M11,14H13V8H11M15,1H9V3H15V1Z"/></svg></div></div>
</div>
<div class="card">
<div class="chead"><span class="ctitle">Opportunity Q</span><span class="chip blue" style="width:62.2px;font-size:12.6px;letter-spacing:1.11px;padding-left:1.11px">20000$</span><svg class="dots" width="24" height="24" viewBox="0 0 24 24" fill="currentColor"><path d="M12,16A2,2 0 0,1 14,18A2,2 0 0,1 12,20A2,2 0 0,1 10,18A2,2 0 0,1 12,16M12,10A2,2 0 0,1 14,12A2,2 0 0,1 12,14A2,2 0 0,1 10,12A2,2 0 0,1 12,10M12,4A2,2 0 0,1 14,6A2,2 0 0,1 12,8A2,2 0 0,1 10,6A2,2 0 0,1 12,4Z"/></svg></div>
<div class="cbody"><div class="cust"><svg class="radio c-blue" width="16" height="16" viewBox="0 0 24 24" fill="currentColor"><path d="M12,20A8,8 0 0,1 4,12A8,8 0 0,1 12,4A8,8 0 0,1 20,12A8,8 0 0,1 12,20M12,2A10,10 0 0,0 2,12A10,10 0 0,0 12,22A10,10 0 0,0 22,12A10,10 0 0,0 12,2M12,7A5,5 0 0,0 7,12A5,5 0 0,0 12,17A5,5 0 0,0 17,12A5,5 0 0,0 12,7Z"/></svg><span>Customer Q</span></div>
<div class="crow"><div class="stars"><svg class="st" width="16" height="16" viewBox="0 0 24 24" fill="currentColor"><path d="M12,17.27L18.18,21L16.54,13.97L22,9.24L14.81,8.62L12,2L9.19,8.62L2,9.24L7.45,13.97L5.82,21L12,17.27Z"/></svg><svg class="st" width="16" height="16" viewBox="0 0 24 24" fill="currentColor"><path d="M12,17.27L18.18,21L16.54,13.97L22,9.24L14.81,8.62L12,2L9.19,8.62L2,9.24L7.45,13.97L5.82,21L12,17.27Z"/></svg><svg class="st" width="16" height="16" viewBox="0 0 24 24" fill="currentColor"><path d="M12,17.27L18.18,21L16.54,13.97L22,9.24L14.81,8.62L12,2L9.19,8.62L2,9.24L7.45,13.97L5.82,21L12,17.27Z"/></svg><svg class="st" width="16" height="16" viewBox="0 0 24 24" fill="currentColor"><path d="M12,17.27L18.18,21L16.54,13.97L22,9.24L14.81,8.62L12,2L9.19,8.62L2,9.24L7.45,13.97L5.82,21L12,17.27Z"/></svg><svg class="st" width="16" height="16" viewBox="0 0 24 24" fill="currentColor"><path d="M12,17.27L18.18,21L16.54,13.97L22,9.24L14.81,8.62L12,2L9.19,8.62L2,9.24L7.45,13.97L5.82,21L12,17.27Z"/></svg></div><svg class="ib" width="24" height="24" viewBox="0 0 24 24" fill="currentColor"><path d="M10,21H14A2,2 0 0,1 12,23A2,2 0 0,1 10,21M21,19V20H3V19L5,17V11C5,7.9 7.03,5.17 10,4.29C10,4.19 10,4.1 10,4A2,2 0 0,1 12,2A2,2 0 0,1 14,4C14,4.1 14,4.19 14,4.29C16.97,5.17 19,7.9 19,11V17L21,19M17,11A5,5 0 0,0 12,6A5,5 0 0,0 7,11V18H17V11Z"/></svg><svg class="it" width="24" height="24" viewBox="0 0 24 24" fill="currentColor"><path d="M12,20A7,7 0 0,1 5,13A7,7 0 0,1 12,6A7,7 0 0,1 19,13A7,7 0 0,1 12,20M19.03,7.39L20.45,5.97C20,5.46 19.55,5 19.04,4.56L17.62,6C16.07,4.74 14.12,4 12,4A9,9 0 0,0 3,13A9,9 0 0,0 12,22C17,22 21,17.97 21,13C21,10.88 20.26,8.93 19.03,7.39M11,14H13V8H11M15,1H9V3H15V1Z"/></svg></div></div>
</div>
<div class="card">
<div class="chead"><span class="ctitle">Opportunity R</span><span class="chip blue" style="width:59px;font-size:12.6px;letter-spacing:0.47px;padding-left:0.47px">21000$</span><svg class="dots" width="24" height="24" viewBox="0 0 24 24" fill="currentColor"><path d="M12,16A2,2 0 0,1 14,18A2,2 0 0,1 12,20A2,2 0 0,1 10,18A2,2 0 0,1 12,16M12,10A2,2 0 0,1 14,12A2,2 0 0,1 12,14A2,2 0 0,1 10,12A2,2 0 0,1 12,10M12,4A2,2 0 0,1 14,6A2,2 0 0,1 12,8A2,2 0 0,1 10,6A2,2 0 0,1 12,4Z"/></svg></div>
<div class="cbody"><div class="cust"><svg class="radio c-blue" width="16" height="16" viewBox="0 0 24 24" fill="currentColor"><path d="M12,20A8,8 0 0,1 4,12A8,8 0 0,1 12,4A8,8 0 0,1 20,12A8,8 0 0,1 12,20M12,2A10,10 0 0,0 2,12A10,10 0 0,0 12,22A10,10 0 0,0 22,12A10,10 0 0,0 12,2M12,7A5,5 0 0,0 7,12A5,5 0 0,0 12,17A5,5 0 0,0 17,12A5,5 0 0,0 12,7Z"/></svg><span>Customer R</span></div>
<div class="crow"><div class="stars"><svg class="st" width="16" height="16" viewBox="0 0 24 24" fill="currentColor"><path d="M12,17.27L18.18,21L16.54,13.97L22,9.24L14.81,8.62L12,2L9.19,8.62L2,9.24L7.45,13.97L5.82,21L12,17.27Z"/></svg><svg class="st" width="16" height="16" viewBox="0 0 24 24" fill="currentColor"><path d="M12,15.39L8.24,17.66L9.23,13.38L5.91,10.5L10.29,10.13L12,6.09L13.71,10.13L18.09,10.5L14.77,13.38L15.76,17.66M22,9.24L14.81,8.63L12,2L9.19,8.63L2,9.24L7.45,13.97L5.82,21L12,17.27L18.18,21L16.54,13.97L22,9.24Z"/></svg><svg class="st" width="16" height="16" viewBox="0 0 24 24" fill="currentColor"><path d="M12,15.39L8.24,17.66L9.23,13.38L5.91,10.5L10.29,10.13L12,6.09L13.71,10.13L18.09,10.5L14.77,13.38L15.76,17.66M22,9.24L14.81,8.63L12,2L9.19,8.63L2,9.24L7.45,13.97L5.82,21L12,17.27L18.18,21L16.54,13.97L22,9.24Z"/></svg><svg class="st" width="16" height="16" viewBox="0 0 24 24" fill="currentColor"><path d="M12,15.39L8.24,17.66L9.23,13.38L5.91,10.5L10.29,10.13L12,6.09L13.71,10.13L18.09,10.5L14.77,13.38L15.76,17.66M22,9.24L14.81,8.63L12,2L9.19,8.63L2,9.24L7.45,13.97L5.82,21L12,17.27L18.18,21L16.54,13.97L22,9.24Z"/></svg><svg class="st" width="16" height="16" viewBox="0 0 24 24" fill="currentColor"><path d="M12,15.39L8.24,17.66L9.23,13.38L5.91,10.5L10.29,10.13L12,6.09L13.71,10.13L18.09,10.5L14.77,13.38L15.76,17.66M22,9.24L14.81,8.63L12,2L9.19,8.63L2,9.24L7.45,13.97L5.82,21L12,17.27L18.18,21L16.54,13.97L22,9.24Z"/></svg></div><svg class="ib" width="24" height="24" viewBox="0 0 24 24" fill="currentColor"><path d="M10,21H14A2,2 0 0,1 12,23A2,2 0 0,1 10,21M21,19V20H3V19L5,17V11C5,7.9 7.03,5.17 10,4.29C10,4.19 10,4.1 10,4A2,2 0 0,1 12,2A2,2 0 0,1 14,4C14,4.1 14,4.19 14,4.29C16.97,5.17 19,7.9 19,11V17L21,19M17,11A5,5 0 0,0 12,6A5,5 0 0,0 7,11V18H17V11Z"/></svg><svg class="it" width="24" height="24" viewBox="0 0 24 24" fill="currentColor"><path d="M12,20A7,7 0 0,1 5,13A7,7 0 0,1 12,6A7,7 0 0,1 19,13A7,7 0 0,1 12,20M19.03,7.39L20.45,5.97C20,5.46 19.55,5 19.04,4.56L17.62,6C16.07,4.74 14.12,4 12,4A9,9 0 0,0 3,13A9,9 0 0,0 12,22C17,22 21,17.97 21,13C21,10.88 20.26,8.93 19.03,7.39M11,14H13V8H11M15,1H9V3H15V1Z"/></svg></div></div>
</div>
</div>
</div><div class="col" style="left:559px;width:256px">
<div class="colhead"><span class="coltitle" style="letter-spacing:0.7px">Negotiation</span><span class="chip indigo cnt">3</span><svg class="hcog" width="24" height="24" viewBox="0 0 24 24" fill="currentColor"><path d="M12,15.5A3.5,3.5 0 0,1 8.5,12A3.5,3.5 0 0,1 12,8.5A3.5,3.5 0 0,1 15.5,12A3.5,3.5 0 0,1 12,15.5M19.43,12.97C19.47,12.65 19.5,12.33 19.5,12C19.5,11.67 19.47,11.34 19.43,11L21.54,9.37C21.73,9.22 21.78,8.95 21.66,8.73L19.66,5.27C19.54,5.05 19.27,4.96 19.05,5.05L16.56,6.05C16.04,5.66 15.5,5.32 14.87,5.07L14.5,2.42C14.46,2.18 14.25,2 14,2H10C9.75,2 9.54,2.18 9.5,2.42L9.13,5.07C8.5,5.32 7.96,5.66 7.44,6.05L4.95,5.05C4.73,4.96 4.46,5.05 4.34,5.27L2.34,8.73C2.21,8.95 2.27,9.22 2.46,9.37L4.57,11C4.53,11.34 4.5,11.67 4.5,12C4.5,12.33 4.53,12.65 4.57,12.97L2.46,14.63C2.27,14.78 2.21,15.05 2.34,15.27L4.34,18.73C4.46,18.95 4.73,19.03 4.95,18.95L7.44,17.94C7.96,18.34 8.5,18.68 9.13,18.93L9.5,21.58C9.54,21.82 9.75,22 10,22H14C14.25,22 14.46,21.82 14.5,21.58L14.87,18.93C15.5,18.67 16.04,18.34 16.56,17.94L19.05,18.95C19.27,19.03 19.54,18.95 19.66,18.73L21.66,15.27C21.78,15.05 21.73,14.78 21.54,14.63L19.43,12.97Z"/></svg><svg class="hplus" width="24" height="24" viewBox="0 0 24 24" fill="currentColor"><path d="M19,13H13V19H11V13H5V11H11V5H13V11H19V13Z"/></svg></div>
<div class="colbody">
<div class="card">
<div class="chead"><span class="ctitle">Opportunity S</span><span class="chip indigo" style="width:54.2px;font-size:12.6px;letter-spacing:1.14px;padding-left:1.14px">5000$</span><svg class="dots" width="24" height="24" viewBox="0 0 24 24" fill="currentColor"><path d="M12,16A2,2 0 0,1 14,18A2,2 0 0,1 12,20A2,2 0 0,1 10,18A2,2 0 0,1 12,16M12,10A2,2 0 0,1 14,12A2,2 0 0,1 12,14A2,2 0 0,1 10,12A2,2 0 0,1 12,10M12,4A2,2 0 0,1 14,6A2,2 0 0,1 12,8A2,2 0 0,1 10,6A2,2 0 0,1 12,4Z"/></svg></div>
<div class="cbody"><div class="cust"><svg class="radio c-indigo" width="16" height="16" viewBox="0 0 24 24" fill="currentColor"><path d="M12,20A8,8 0 0,1 4,12A8,8 0 0,1 12,4A8,8 0 0,1 20,12A8,8 0 0,1 12,20M12,2A10,10 0 0,0 2,12A10,10 0 0,0 12,22A10,10 0 0,0 22,12A10,10 0 0,0 12,2M12,7A5,5 0 0,0 7,12A5,5 0 0,0 12,17A5,5 0 0,0 17,12A5,5 0 0,0 12,7Z"/></svg><span>Customer S</span></div>
<div class="crow"><div class="stars"><svg class="st" width="16" height="16" viewBox="0 0 24 24" fill="currentColor"><path d="M12,17.27L18.18,21L16.54,13.97L22,9.24L14.81,8.62L12,2L9.19,8.62L2,9.24L7.45,13.97L5.82,21L12,17.27Z"/></svg><svg class="st" width="16" height="16" viewBox="0 0 24 24" fill="currentColor"><path d="M12,17.27L18.18,21L16.54,13.97L22,9.24L14.81,8.62L12,2L9.19,8.62L2,9.24L7.45,13.97L5.82,21L12,17.27Z"/></svg><svg class="st" width="16" height="16" viewBox="0 0 24 24" fill="currentColor"><path d="M12,15.39L8.24,17.66L9.23,13.38L5.91,10.5L10.29,10.13L12,6.09L13.71,10.13L18.09,10.5L14.77,13.38L15.76,17.66M22,9.24L14.81,8.63L12,2L9.19,8.63L2,9.24L7.45,13.97L5.82,21L12,17.27L18.18,21L16.54,13.97L22,9.24Z"/></svg><svg class="st" width="16" height="16" viewBox="0 0 24 24" fill="currentColor"><path d="M12,15.39L8.24,17.66L9.23,13.38L5.91,10.5L10.29,10.13L12,6.09L13.71,10.13L18.09,10.5L14.77,13.38L15.76,17.66M22,9.24L14.81,8.63L12,2L9.19,8.63L2,9.24L7.45,13.97L5.82,21L12,17.27L18.18,21L16.54,13.97L22,9.24Z"/></svg><svg class="st" width="16" height="16" viewBox="0 0 24 24" fill="currentColor"><path d="M12,15.39L8.24,17.66L9.23,13.38L5.91,10.5L10.29,10.13L12,6.09L13.71,10.13L18.09,10.5L14.77,13.38L15.76,17.66M22,9.24L14.81,8.63L12,2L9.19,8.63L2,9.24L7.45,13.97L5.82,21L12,17.27L18.18,21L16.54,13.97L22,9.24Z"/></svg></div><svg class="ib" width="24" height="24" viewBox="0 0 24 24" fill="currentColor"><path d="M10,21H14A2,2 0 0,1 12,23A2,2 0 0,1 10,21M21,19V20H3V19L5,17V11C5,7.9 7.03,5.17 10,4.29C10,4.19 10,4.1 10,4A2,2 0 0,1 12,2A2,2 0 0,1 14,4C14,4.1 14,4.19 14,4.29C16.97,5.17 19,7.9 19,11V17L21,19M17,11A5,5 0 0,0 12,6A5,5 0 0,0 7,11V18H17V11Z"/></svg><svg class="it" width="24" height="24" viewBox="0 0 24 24" fill="currentColor"><path d="M12,20A7,7 0 0,1 5,13A7,7 0 0,1 12,6A7,7 0 0,1 19,13A7,7 0 0,1 12,20M19.03,7.39L20.45,5.97C20,5.46 19.55,5 19.04,4.56L17.62,6C16.07,4.74 14.12,4 12,4A9,9 0 0,0 3,13A9,9 0 0,0 12,22C17,22 21,17.97 21,13C21,10.88 20.26,8.93 19.03,7.39M11,14H13V8H11M15,1H9V3H15V1Z"/></svg></div></div>
</div>
<div class="card">
<div class="chead"><span class="ctitle">Opportunity T</span><span class="chip indigo" style="width:52.2px;font-size:12.6px;letter-spacing:0.64px;padding-left:0.64px">1000$</span><svg class="dots" width="24" height="24" viewBox="0 0 24 24" fill="currentColor"><path d="M12,16A2,2 0 0,1 14,18A2,2 0 0,1 12,20A2,2 0 0,1 10,18A2,2 0 0,1 12,16M12,10A2,2 0 0,1 14,12A2,2 0 0,1 12,14A2,2 0 0,1 10,12A2,2 0 0,1 12,10M12,4A2,2 0 0,1 14,6A2,2 0 0,1 12,8A2,2 0 0,1 10,6A2,2 0 0,1 12,4Z"/></svg></div>
<div class="cbody"><div class="cust"><svg class="radio c-indigo" width="16" height="16" viewBox="0 0 24 24" fill="currentColor"><path d="M12,20A8,8 0 0,1 4,12A8,8 0 0,1 12,4A8,8 0 0,1 20,12A8,8 0 0,1 12,20M12,2A10,10 0 0,0 2,12A10,10 0 0,0 12,22A10,10 0 0,0 22,12A10,10 0 0,0 12,2M12,7A5,5 0 0,0 7,12A5,5 0 0,0 12,17A5,5 0 0,0 17,12A5,5 0 0,0 12,7Z"/></svg><span>Customer T</span></div>
<div class="crow"><div class="stars"><svg class="st" width="16" height="16" viewBox="0 0 24 24" fill="currentColor"><path d="M12,17.27L18.18,21L16.54,13.97L22,9.24L14.81,8.62L12,2L9.19,8.62L2,9.24L7.45,13.97L5.82,21L12,17.27Z"/></svg><svg class="st" width="16" height="16" viewBox="0 0 24 24" fill="currentColor"><path d="M12,17.27L18.18,21L16.54,13.97L22,9.24L14.81,8.62L12,2L9.19,8.62L2,9.24L7.45,13.97L5.82,21L12,17.27Z"/></svg><svg class="st" width="16" height="16" viewBox="0 0 24 24" fill="currentColor"><path d="M12,17.27L18.18,21L16.54,13.97L22,9.24L14.81,8.62L12,2L9.19,8.62L2,9.24L7.45,13.97L5.82,21L12,17.27Z"/></svg><svg class="st" width="16" height="16" viewBox="0 0 24 24" fill="currentColor"><path d="M12,15.39L8.24,17.66L9.23,13.38L5.91,10.5L10.29,10.13L12,6.09L13.71,10.13L18.09,10.5L14.77,13.38L15.76,17.66M22,9.24L14.81,8.63L12,2L9.19,8.63L2,9.24L7.45,13.97L5.82,21L12,17.27L18.18,21L16.54,13.97L22,9.24Z"/></svg><svg class="st" width="16" height="16" viewBox="0 0 24 24" fill="currentColor"><path d="M12,15.39L8.24,17.66L9.23,13.38L5.91,10.5L10.29,10.13L12,6.09L13.71,10.13L18.09,10.5L14.77,13.38L15.76,17.66M22,9.24L14.81,8.63L12,2L9.19,8.63L2,9.24L7.45,13.97L5.82,21L12,17.27L18.18,21L16.54,13.97L22,9.24Z"/></svg></div><svg class="ib" width="24" height="24" viewBox="0 0 24 24" fill="currentColor"><path d="M10,21H14A2,2 0 0,1 12,23A2,2 0 0,1 10,21M21,19V20H3V19L5,17V11C5,7.9 7.03,5.17 10,4.29C10,4.19 10,4.1 10,4A2,2 0 0,1 12,2A2,2 0 0,1 14,4C14,4.1 14,4.19 14,4.29C16.97,5.17 19,7.9 19,11V17L21,19M17,11A5,5 0 0,0 12,6A5,5 0 0,0 7,11V18H17V11Z"/></svg><svg class="it" width="24" height="24" viewBox="0 0 24 24" fill="currentColor"><path d="M12,20A7,7 0 0,1 5,13A7,7 0 0,1 12,6A7,7 0 0,1 19,13A7,7 0 0,1 12,20M19.03,7.39L20.45,5.97C20,5.46 19.55,5 19.04,4.56L17.62,6C16.07,4.74 14.12,4 12,4A9,9 0 0,0 3,13A9,9 0 0,0 12,22C17,22 21,17.97 21,13C21,10.88 20.26,8.93 19.03,7.39M11,14H13V8H11M15,1H9V3H15V1Z"/></svg></div></div>
</div>
<div class="card">
<div class="chead"><span class="ctitle">Opportunity U</span><span class="chip indigo" style="width:60px;font-size:12.6px;letter-spacing:0.67px;padding-left:0.67px">10000$</span><svg class="dots" width="24" height="24" viewBox="0 0 24 24" fill="currentColor"><path d="M12,16A2,2 0 0,1 14,18A2,2 0 0,1 12,20A2,2 0 0,1 10,18A2,2 0 0,1 12,16M12,10A2,2 0 0,1 14,12A2,2 0 0,1 12,14A2,2 0 0,1 10,12A2,2 0 0,1 12,10M12,4A2,2 0 0,1 14,6A2,2 0 0,1 12,8A2,2 0 0,1 10,6A2,2 0 0,1 12,4Z"/></svg></div>
<div class="cbody"><div class="cust"><svg class="radio c-indigo" width="16" height="16" viewBox="0 0 24 24" fill="currentColor"><path d="M12,20A8,8 0 0,1 4,12A8,8 0 0,1 12,4A8,8 0 0,1 20,12A8,8 0 0,1 12,20M12,2A10,10 0 0,0 2,12A10,10 0 0,0 12,22A10,10 0 0,0 22,12A10,10 0 0,0 12,2M12,7A5,5 0 0,0 7,12A5,5 0 0,0 12,17A5,5 0 0,0 17,12A5,5 0 0,0 12,7Z"/></svg><span>Customer U</span></div>
<div class="crow"><div class="stars"><svg class="st" width="16" height="16" viewBox="0 0 24 24" fill="currentColor"><path d="M12,17.27L18.18,21L16.54,13.97L22,9.24L14.81,8.62L12,2L9.19,8.62L2,9.24L7.45,13.97L5.82,21L12,17.27Z"/></svg><svg class="st" width="16" height="16" viewBox="0 0 24 24" fill="currentColor"><path d="M12,17.27L18.18,21L16.54,13.97L22,9.24L14.81,8.62L12,2L9.19,8.62L2,9.24L7.45,13.97L5.82,21L12,17.27Z"/></svg><svg class="st" width="16" height="16" viewBox="0 0 24 24" fill="currentColor"><path d="M12,17.27L18.18,21L16.54,13.97L22,9.24L14.81,8.62L12,2L9.19,8.62L2,9.24L7.45,13.97L5.82,21L12,17.27Z"/></svg><svg class="st" width="16" height="16" viewBox="0 0 24 24" fill="currentColor"><path d="M12,15.39L8.24,17.66L9.23,13.38L5.91,10.5L10.29,10.13L12,6.09L13.71,10.13L18.09,10.5L14.77,13.38L15.76,17.66M22,9.24L14.81,8.63L12,2L9.19,8.63L2,9.24L7.45,13.97L5.82,21L12,17.27L18.18,21L16.54,13.97L22,9.24Z"/></svg><svg class="st" width="16" height="16" viewBox="0 0 24 24" fill="currentColor"><path d="M12,15.39L8.24,17.66L9.23,13.38L5.91,10.5L10.29,10.13L12,6.09L13.71,10.13L18.09,10.5L14.77,13.38L15.76,17.66M22,9.24L14.81,8.63L12,2L9.19,8.63L2,9.24L7.45,13.97L5.82,21L12,17.27L18.18,21L16.54,13.97L22,9.24Z"/></svg></div><svg class="ib" width="24" height="24" viewBox="0 0 24 24" fill="currentColor"><path d="M10,21H14A2,2 0 0,1 12,23A2,2 0 0,1 10,21M21,19V20H3V19L5,17V11C5,7.9 7.03,5.17 10,4.29C10,4.19 10,4.1 10,4A2,2 0 0,1 12,2A2,2 0 0,1 14,4C14,4.1 14,4.19 14,4.29C16.97,5.17 19,7.9 19,11V17L21,19M17,11A5,5 0 0,0 12,6A5,5 0 0,0 7,11V18H17V11Z"/></svg><svg class="it" width="24" height="24" viewBox="0 0 24 24" fill="currentColor"><path d="M12,20A7,7 0 0,1 5,13A7,7 0 0,1 12,6A7,7 0 0,1 19,13A7,7 0 0,1 12,20M19.03,7.39L20.45,5.97C20,5.46 19.55,5 19.04,4.56L17.62,6C16.07,4.74 14.12,4 12,4A9,9 0 0,0 3,13A9,9 0 0,0 12,22C17,22 21,17.97 21,13C21,10.88 20.26,8.93 19.03,7.39M11,14H13V8H11M15,1H9V3H15V1Z"/></svg></div></div>
</div>
</div>
</div><div class="col" style="left:819px;width:258px">
<div class="colhead"><span class="coltitle" style="letter-spacing:0.6px">Won</span><span class="chip green cnt">5</span><svg class="hcog" width="24" height="24" viewBox="0 0 24 24" fill="currentColor"><path d="M12,15.5A3.5,3.5 0 0,1 8.5,12A3.5,3.5 0 0,1 12,8.5A3.5,3.5 0 0,1 15.5,12A3.5,3.5 0 0,1 12,15.5M19.43,12.97C19.47,12.65 19.5,12.33 19.5,12C19.5,11.67 19.47,11.34 19.43,11L21.54,9.37C21.73,9.22 21.78,8.95 21.66,8.73L19.66,5.27C19.54,5.05 19.27,4.96 19.05,5.05L16.56,6.05C16.04,5.66 15.5,5.32 14.87,5.07L14.5,2.42C14.46,2.18 14.25,2 14,2H10C9.75,2 9.54,2.18 9.5,2.42L9.13,5.07C8.5,5.32 7.96,5.66 7.44,6.05L4.95,5.05C4.73,4.96 4.46,5.05 4.34,5.27L2.34,8.73C2.21,8.95 2.27,9.22 2.46,9.37L4.57,11C4.53,11.34 4.5,11.67 4.5,12C4.5,12.33 4.53,12.65 4.57,12.97L2.46,14.63C2.27,14.78 2.21,15.05 2.34,15.27L4.34,18.73C4.46,18.95 4.73,19.03 4.95,18.95L7.44,17.94C7.96,18.34 8.5,18.68 9.13,18.93L9.5,21.58C9.54,21.82 9.75,22 10,22H14C14.25,22 14.46,21.82 14.5,21.58L14.87,18.93C15.5,18.67 16.04,18.34 16.56,17.94L19.05,18.95C19.27,19.03 19.54,18.95 19.66,18.73L21.66,15.27C21.78,15.05 21.73,14.78 21.54,14.63L19.43,12.97Z"/></svg><svg class="hplus" width="24" height="24" viewBox="0 0 24 24" fill="currentColor"><path d="M19,13H13V19H11V13H5V11H11V5H13V11H19V13Z"/></svg></div>
<div class="colbody">
<div class="card">
<div class="chead"><span class="ctitle">Opportunity X</span><span class="chip green" style="width:53.4px;font-size:12.6px;letter-spacing:0.94px;padding-left:0.94px">6000$</span><svg class="dots" width="24" height="24" viewBox="0 0 24 24" fill="currentColor"><path d="M12,16A2,2 0 0,1 14,18A2,2 0 0,1 12,20A2,2 0 0,1 10,18A2,2 0 0,1 12,16M12,10A2,2 0 0,1 14,12A2,2 0 0,1 12,14A2,2 0 0,1 10,12A2,2 0 0,1 12,10M12,4A2,2 0 0,1 14,6A2,2 0 0,1 12,8A2,2 0 0,1 10,6A2,2 0 0,1 12,4Z"/></svg></div>
<div class="cbody"><div class="cust"><svg class="radio c-green" width="16" height="16" viewBox="0 0 24 24" fill="currentColor"><path d="M12,20A8,8 0 0,1 4,12A8,8 0 0,1 12,4A8,8 0 0,1 20,12A8,8 0 0,1 12,20M12,2A10,10 0 0,0 2,12A10,10 0 0,0 12,22A10,10 0 0,0 22,12A10,10 0 0,0 12,2M12,7A5,5 0 0,0 7,12A5,5 0 0,0 12,17A5,5 0 0,0 17,12A5,5 0 0,0 12,7Z"/></svg><span>Customer X</span></div>
<div class="crow"><div class="stars"><svg class="st" width="16" height="16" viewBox="0 0 24 24" fill="currentColor"><path d="M12,17.27L18.18,21L16.54,13.97L22,9.24L14.81,8.62L12,2L9.19,8.62L2,9.24L7.45,13.97L5.82,21L12,17.27Z"/></svg><svg class="st" width="16" height="16" viewBox="0 0 24 24" fill="currentColor"><path d="M12,17.27L18.18,21L16.54,13.97L22,9.24L14.81,8.62L12,2L9.19,8.62L2,9.24L7.45,13.97L5.82,21L12,17.27Z"/></svg><svg class="st" width="16" height="16" viewBox="0 0 24 24" fill="currentColor"><path d="M12,15.39L8.24,17.66L9.23,13.38L5.91,10.5L10.29,10.13L12,6.09L13.71,10.13L18.09,10.5L14.77,13.38L15.76,17.66M22,9.24L14.81,8.63L12,2L9.19,8.63L2,9.24L7.45,13.97L5.82,21L12,17.27L18.18,21L16.54,13.97L22,9.24Z"/></svg><svg class="st" width="16" height="16" viewBox="0 0 24 24" fill="currentColor"><path d="M12,15.39L8.24,17.66L9.23,13.38L5.91,10.5L10.29,10.13L12,6.09L13.71,10.13L18.09,10.5L14.77,13.38L15.76,17.66M22,9.24L14.81,8.63L12,2L9.19,8.63L2,9.24L7.45,13.97L5.82,21L12,17.27L18.18,21L16.54,13.97L22,9.24Z"/></svg><svg class="st" width="16" height="16" viewBox="0 0 24 24" fill="currentColor"><path d="M12,15.39L8.24,17.66L9.23,13.38L5.91,10.5L10.29,10.13L12,6.09L13.71,10.13L18.09,10.5L14.77,13.38L15.76,17.66M22,9.24L14.81,8.63L12,2L9.19,8.63L2,9.24L7.45,13.97L5.82,21L12,17.27L18.18,21L16.54,13.97L22,9.24Z"/></svg></div><svg class="ib" width="24" height="24" viewBox="0 0 24 24" fill="currentColor"><path d="M10,21H14A2,2 0 0,1 12,23A2,2 0 0,1 10,21M21,19V20H3V19L5,17V11C5,7.9 7.03,5.17 10,4.29C10,4.19 10,4.1 10,4A2,2 0 0,1 12,2A2,2 0 0,1 14,4C14,4.1 14,4.19 14,4.29C16.97,5.17 19,7.9 19,11V17L21,19M17,11A5,5 0 0,0 12,6A5,5 0 0,0 7,11V18H17V11Z"/></svg><svg class="it" width="24" height="24" viewBox="0 0 24 24" fill="currentColor"><path d="M12,20A7,7 0 0,1 5,13A7,7 0 0,1 12,6A7,7 0 0,1 19,13A7,7 0 0,1 12,20M19.03,7.39L20.45,5.97C20,5.46 19.55,5 19.04,4.56L17.62,6C16.07,4.74 14.12,4 12,4A9,9 0 0,0 3,13A9,9 0 0,0 12,22C17,22 21,17.97 21,13C21,10.88 20.26,8.93 19.03,7.39M11,14H13V8H11M15,1H9V3H15V1Z"/></svg></div></div>
</div>
<div class="card">
<div class="chead"><span class="ctitle">Opportunity Y</span><span class="chip green" style="width:62px;font-size:12.6px;letter-spacing:1.07px;padding-left:1.07px">32000$</span><svg class="dots" width="24" height="24" viewBox="0 0 24 24" fill="currentColor"><path d="M12,16A2,2 0 0,1 14,18A2,2 0 0,1 12,20A2,2 0 0,1 10,18A2,2 0 0,1 12,16M12,10A2,2 0 0,1 14,12A2,2 0 0,1 12,14A2,2 0 0,1 10,12A2,2 0 0,1 12,10M12,4A2,2 0 0,1 14,6A2,2 0 0,1 12,8A2,2 0 0,1 10,6A2,2 0 0,1 12,4Z"/></svg></div>
<div class="cbody"><div class="cust"><svg class="radio c-green" width="16" height="16" viewBox="0 0 24 24" fill="currentColor"><path d="M12,20A8,8 0 0,1 4,12A8,8 0 0,1 12,4A8,8 0 0,1 20,12A8,8 0 0,1 12,20M12,2A10,10 0 0,0 2,12A10,10 0 0,0 12,22A10,10 0 0,0 22,12A10,10 0 0,0 12,2M12,7A5,5 0 0,0 7,12A5,5 0 0,0 12,17A5,5 0 0,0 17,12A5,5 0 0,0 12,7Z"/></svg><span>Customer Y</span></div>
<div class="crow"><div class="stars"><svg class="st" width="16" height="16" viewBox="0 0 24 24" fill="currentColor"><path d="M12,17.27L18.18,21L16.54,13.97L22,9.24L14.81,8.62L12,2L9.19,8.62L2,9.24L7.45,13.97L5.82,21L12,17.27Z"/></svg><svg class="st" width="16" height="16" viewBox="0 0 24 24" fill="currentColor"><path d="M12,17.27L18.18,21L16.54,13.97L22,9.24L14.81,8.62L12,2L9.19,8.62L2,9.24L7.45,13.97L5.82,21L12,17.27Z"/></svg><svg class="st" width="16" height="16" viewBox="0 0 24 24" fill="currentColor"><path d="M12,17.27L18.18,21L16.54,13.97L22,9.24L14.81,8.62L12,2L9.19,8.62L2,9.24L7.45,13.97L5.82,21L12,17.27Z"/></svg><svg class="st" width="16" height="16" viewBox="0 0 24 24" fill="currentColor"><path d="M12,15.39L8.24,17.66L9.23,13.38L5.91,10.5L10.29,10.13L12,6.09L13.71,10.13L18.09,10.5L14.77,13.38L15.76,17.66M22,9.24L14.81,8.63L12,2L9.19,8.63L2,9.24L7.45,13.97L5.82,21L12,17.27L18.18,21L16.54,13.97L22,9.24Z"/></svg><svg class="st" width="16" height="16" viewBox="0 0 24 24" fill="currentColor"><path d="M12,15.39L8.24,17.66L9.23,13.38L5.91,10.5L10.29,10.13L12,6.09L13.71,10.13L18.09,10.5L14.77,13.38L15.76,17.66M22,9.24L14.81,8.63L12,2L9.19,8.63L2,9.24L7.45,13.97L5.82,21L12,17.27L18.18,21L16.54,13.97L22,9.24Z"/></svg></div><svg class="ib" width="24" height="24" viewBox="0 0 24 24" fill="currentColor"><path d="M10,21H14A2,2 0 0,1 12,23A2,2 0 0,1 10,21M21,19V20H3V19L5,17V11C5,7.9 7.03,5.17 10,4.29C10,4.19 10,4.1 10,4A2,2 0 0,1 12,2A2,2 0 0,1 14,4C14,4.1 14,4.19 14,4.29C16.97,5.17 19,7.9 19,11V17L21,19M17,11A5,5 0 0,0 12,6A5,5 0 0,0 7,11V18H17V11Z"/></svg><svg class="it" width="24" height="24" viewBox="0 0 24 24" fill="currentColor"><path d="M12,20A7,7 0 0,1 5,13A7,7 0 0,1 12,6A7,7 0 0,1 19,13A7,7 0 0,1 12,20M19.03,7.39L20.45,5.97C20,5.46 19.55,5 19.04,4.56L17.62,6C16.07,4.74 14.12,4 12,4A9,9 0 0,0 3,13A9,9 0 0,0 12,22C17,22 21,17.97 21,13C21,10.88 20.26,8.93 19.03,7.39M11,14H13V8H11M15,1H9V3H15V1Z"/></svg></div></div>
</div>
<div class="card">
<div class="chead"><span class="ctitle">Opportunity Z</span><span class="chip green" style="width:62.1px;font-size:12.6px;letter-spacing:1.09px;padding-left:1.09px">50000$</span><svg class="dots" width="24" height="24" viewBox="0 0 24 24" fill="currentColor"><path d="M12,16A2,2 0 0,1 14,18A2,2 0 0,1 12,20A2,2 0 0,1 10,18A2,2 0 0,1 12,16M12,10A2,2 0 0,1 14,12A2,2 0 0,1 12,14A2,2 0 0,1 10,12A2,2 0 0,1 12,10M12,4A2,2 0 0,1 14,6A2,2 0 0,1 12,8A2,2 0 0,1 10,6A2,2 0 0,1 12,4Z"/></svg></div>
<div class="cbody"><div class="cust"><svg class="radio c-green" width="16" height="16" viewBox="0 0 24 24" fill="currentColor"><path d="M12,20A8,8 0 0,1 4,12A8,8 0 0,1 12,4A8,8 0 0,1 20,12A8,8 0 0,1 12,20M12,2A10,10 0 0,0 2,12A10,10 0 0,0 12,22A10,10 0 0,0 22,12A10,10 0 0,0 12,2M12,7A5,5 0 0,0 7,12A5,5 0 0,0 12,17A5,5 0 0,0 17,12A5,5 0 0,0 12,7Z"/></svg><span>Customer Z</span></div>
<div class="crow"><div class="stars"><svg class="st" width="16" height="16" viewBox="0 0 24 24" fill="currentColor"><path d="M12,17.27L18.18,21L16.54,13.97L22,9.24L14.81,8.62L12,2L9.19,8.62L2,9.24L7.45,13.97L5.82,21L12,17.27Z"/></svg><svg class="st" width="16" height="16" viewBox="0 0 24 24" fill="currentColor"><path d="M12,17.27L18.18,21L16.54,13.97L22,9.24L14.81,8.62L12,2L9.19,8.62L2,9.24L7.45,13.97L5.82,21L12,17.27Z"/></svg><svg class="st" width="16" height="16" viewBox="0 0 24 24" fill="currentColor"><path d="M12,17.27L18.18,21L16.54,13.97L22,9.24L14.81,8.62L12,2L9.19,8.62L2,9.24L7.45,13.97L5.82,21L12,17.27Z"/></svg><svg class="st" width="16" height="16" viewBox="0 0 24 24" fill="currentColor"><path d="M12,17.27L18.18,21L16.54,13.97L22,9.24L14.81,8.62L12,2L9.19,8.62L2,9.24L7.45,13.97L5.82,21L12,17.27Z"/></svg><svg class="st" width="16" height="16" viewBox="0 0 24 24" fill="currentColor"><path d="M12,17.27L18.18,21L16.54,13.97L22,9.24L14.81,8.62L12,2L9.19,8.62L2,9.24L7.45,13.97L5.82,21L12,17.27Z"/></svg></div><svg class="ib" width="24" height="24" viewBox="0 0 24 24" fill="currentColor"><path d="M10,21H14A2,2 0 0,1 12,23A2,2 0 0,1 10,21M21,19V20H3V19L5,17V11C5,7.9 7.03,5.17 10,4.29C10,4.19 10,4.1 10,4A2,2 0 0,1 12,2A2,2 0 0,1 14,4C14,4.1 14,4.19 14,4.29C16.97,5.17 19,7.9 19,11V17L21,19M17,11A5,5 0 0,0 12,6A5,5 0 0,0 7,11V18H17V11Z"/></svg><svg class="it" width="24" height="24" viewBox="0 0 24 24" fill="currentColor"><path d="M12,20A7,7 0 0,1 5,13A7,7 0 0,1 12,6A7,7 0 0,1 19,13A7,7 0 0,1 12,20M19.03,7.39L20.45,5.97C20,5.46 19.55,5 19.04,4.56L17.62,6C16.07,4.74 14.12,4 12,4A9,9 0 0,0 3,13A9,9 0 0,0 12,22C17,22 21,17.97 21,13C21,10.88 20.26,8.93 19.03,7.39M11,14H13V8H11M15,1H9V3H15V1Z"/></svg></div></div>
</div>
<div class="card">
<div class="chead"><span class="ctitle">Opportunity D</span><span class="chip green" style="width:62.2px;font-size:12.6px;letter-spacing:1.11px;padding-left:1.11px">20000$</span><svg class="dots" width="24" height="24" viewBox="0 0 24 24" fill="currentColor"><path d="M12,16A2,2 0 0,1 14,18A2,2 0 0,1 12,20A2,2 0 0,1 10,18A2,2 0 0,1 12,16M12,10A2,2 0 0,1 14,12A2,2 0 0,1 12,14A2,2 0 0,1 10,12A2,2 0 0,1 12,10M12,4A2,2 0 0,1 14,6A2,2 0 0,1 12,8A2,2 0 0,1 10,6A2,2 0 0,1 12,4Z"/></svg></div>
<div class="cbody"><div class="cust"><svg class="radio c-green" width="16" height="16" viewBox="0 0 24 24" fill="currentColor"><path d="M12,20A8,8 0 0,1 4,12A8,8 0 0,1 12,4A8,8 0 0,1 20,12A8,8 0 0,1 12,20M12,2A10,10 0 0,0 2,12A10,10 0 0,0 12,22A10,10 0 0,0 22,12A10,10 0 0,0 12,2M12,7A5,5 0 0,0 7,12A5,5 0 0,0 12,17A5,5 0 0,0 17,12A5,5 0 0,0 12,7Z"/></svg><span>Customer D</span></div>
<div class="crow"><div class="stars"><svg class="st" width="16" height="16" viewBox="0 0 24 24" fill="currentColor"><path d="M12,17.27L18.18,21L16.54,13.97L22,9.24L14.81,8.62L12,2L9.19,8.62L2,9.24L7.45,13.97L5.82,21L12,17.27Z"/></svg><svg class="st" width="16" height="16" viewBox="0 0 24 24" fill="currentColor"><path d="M12,17.27L18.18,21L16.54,13.97L22,9.24L14.81,8.62L12,2L9.19,8.62L2,9.24L7.45,13.97L5.82,21L12,17.27Z"/></svg><svg class="st" width="16" height="16" viewBox="0 0 24 24" fill="currentColor"><path d="M12,17.27L18.18,21L16.54,13.97L22,9.24L14.81,8.62L12,2L9.19,8.62L2,9.24L7.45,13.97L5.82,21L12,17.27Z"/></svg><svg class="st" width="16" height="16" viewBox="0 0 24 24" fill="currentColor"><path d="M12,17.27L18.18,21L16.54,13.97L22,9.24L14.81,8.62L12,2L9.19,8.62L2,9.24L7.45,13.97L5.82,21L12,17.27Z"/></svg><svg class="st" width="16" height="16" viewBox="0 0 24 24" fill="currentColor"><path d="M12,17.27L18.18,21L16.54,13.97L22,9.24L14.81,8.62L12,2L9.19,8.62L2,9.24L7.45,13.97L5.82,21L12,17.27Z"/></svg></div><svg class="ib" width="24" height="24" viewBox="0 0 24 24" fill="currentColor"><path d="M10,21H14A2,2 0 0,1 12,23A2,2 0 0,1 10,21M21,19V20H3V19L5,17V11C5,7.9 7.03,5.17 10,4.29C10,4.19 10,4.1 10,4A2,2 0 0,1 12,2A2,2 0 0,1 14,4C14,4.1 14,4.19 14,4.29C16.97,5.17 19,7.9 19,11V17L21,19M17,11A5,5 0 0,0 12,6A5,5 0 0,0 7,11V18H17V11Z"/></svg><svg class="it" width="24" height="24" viewBox="0 0 24 24" fill="currentColor"><path d="M12,20A7,7 0 0,1 5,13A7,7 0 0,1 12,6A7,7 0 0,1 19,13A7,7 0 0,1 12,20M19.03,7.39L20.45,5.97C20,5.46 19.55,5 19.04,4.56L17.62,6C16.07,4.74 14.12,4 12,4A9,9 0 0,0 3,13A9,9 0 0,0 12,22C17,22 21,17.97 21,13C21,10.88 20.26,8.93 19.03,7.39M11,14H13V8H11M15,1H9V3H15V1Z"/></svg></div></div>
</div>
<div class="card">
<div class="chead"><span class="ctitle">Opportunity W</span><span class="chip green" style="width:52.3px;font-size:12.6px;letter-spacing:0.66px;padding-left:0.66px">7000$</span><svg class="dots" width="24" height="24" viewBox="0 0 24 24" fill="currentColor"><path d="M12,16A2,2 0 0,1 14,18A2,2 0 0,1 12,20A2,2 0 0,1 10,18A2,2 0 0,1 12,16M12,10A2,2 0 0,1 14,12A2,2 0 0,1 12,14A2,2 0 0,1 10,12A2,2 0 0,1 12,10M12,4A2,2 0 0,1 14,6A2,2 0 0,1 12,8A2,2 0 0,1 10,6A2,2 0 0,1 12,4Z"/></svg></div>
<div class="cbody"><div class="cust"><svg class="radio c-green" width="16" height="16" viewBox="0 0 24 24" fill="currentColor"><path d="M12,20A8,8 0 0,1 4,12A8,8 0 0,1 12,4A8,8 0 0,1 20,12A8,8 0 0,1 12,20M12,2A10,10 0 0,0 2,12A10,10 0 0,0 12,22A10,10 0 0,0 22,12A10,10 0 0,0 12,2M12,7A5,5 0 0,0 7,12A5,5 0 0,0 12,17A5,5 0 0,0 17,12A5,5 0 0,0 12,7Z"/></svg><span>Customer W</span></div>
<div class="crow"><div class="stars"><svg class="st" width="16" height="16" viewBox="0 0 24 24" fill="currentColor"><path d="M12,17.27L18.18,21L16.54,13.97L22,9.24L14.81,8.62L12,2L9.19,8.62L2,9.24L7.45,13.97L5.82,21L12,17.27Z"/></svg><svg class="st" width="16" height="16" viewBox="0 0 24 24" fill="currentColor"><path d="M12,17.27L18.18,21L16.54,13.97L22,9.24L14.81,8.62L12,2L9.19,8.62L2,9.24L7.45,13.97L5.82,21L12,17.27Z"/></svg><svg class="st" width="16" height="16" viewBox="0 0 24 24" fill="currentColor"><path d="M12,17.27L18.18,21L16.54,13.97L22,9.24L14.81,8.62L12,2L9.19,8.62L2,9.24L7.45,13.97L5.82,21L12,17.27Z"/></svg><svg class="st" width="16" height="16" viewBox="0 0 24 24" fill="currentColor"><path d="M12,17.27L18.18,21L16.54,13.97L22,9.24L14.81,8.62L12,2L9.19,8.62L2,9.24L7.45,13.97L5.82,21L12,17.27Z"/></svg><svg class="st" width="16" height="16" viewBox="0 0 24 24" fill="currentColor"><path d="M12,15.39L8.24,17.66L9.23,13.38L5.91,10.5L10.29,10.13L12,6.09L13.71,10.13L18.09,10.5L14.77,13.38L15.76,17.66M22,9.24L14.81,8.63L12,2L9.19,8.63L2,9.24L7.45,13.97L5.82,21L12,17.27L18.18,21L16.54,13.97L22,9.24Z"/></svg></div><svg class="ib" width="24" height="24" viewBox="0 0 24 24" fill="currentColor"><path d="M10,21H14A2,2 0 0,1 12,23A2,2 0 0,1 10,21M21,19V20H3V19L5,17V11C5,7.9 7.03,5.17 10,4.29C10,4.19 10,4.1 10,4A2,2 0 0,1 12,2A2,2 0 0,1 14,4C14,4.1 14,4.19 14,4.29C16.97,5.17 19,7.9 19,11V17L21,19M17,11A5,5 0 0,0 12,6A5,5 0 0,0 7,11V18H17V11Z"/></svg><svg class="it" width="24" height="24" viewBox="0 0 24 24" fill="currentColor"><path d="M12,20A7,7 0 0,1 5,13A7,7 0 0,1 12,6A7,7 0 0,1 19,13A7,7 0 0,1 12,20M19.03,7.39L20.45,5.97C20,5.46 19.55,5 19.04,4.56L17.62,6C16.07,4.74 14.12,4 12,4A9,9 0 0,0 3,13A9,9 0 0,0 12,22C17,22 21,17.97 21,13C21,10.88 20.26,8.93 19.03,7.39M11,14H13V8H11M15,1H9V3H15V1Z"/></svg></div></div>
</div>
</div>
</div><div class="col" style="left:1081px;width:277px">
<div class="colhead"><span class="coltitle" style="letter-spacing:0.2px">Extra column 1</span><span class="chip brown cnt">1</span><svg class="hcog" width="24" height="24" viewBox="0 0 24 24" fill="currentColor"><path d="M12,15.5A3.5,3.5 0 0,1 8.5,12A3.5,3.5 0 0,1 12,8.5A3.5,3.5 0 0,1 15.5,12A3.5,3.5 0 0,1 12,15.5M19.43,12.97C19.47,12.65 19.5,12.33 19.5,12C19.5,11.67 19.47,11.34 19.43,11L21.54,9.37C21.73,9.22 21.78,8.95 21.66,8.73L19.66,5.27C19.54,5.05 19.27,4.96 19.05,5.05L16.56,6.05C16.04,5.66 15.5,5.32 14.87,5.07L14.5,2.42C14.46,2.18 14.25,2 14,2H10C9.75,2 9.54,2.18 9.5,2.42L9.13,5.07C8.5,5.32 7.96,5.66 7.44,6.05L4.95,5.05C4.73,4.96 4.46,5.05 4.34,5.27L2.34,8.73C2.21,8.95 2.27,9.22 2.46,9.37L4.57,11C4.53,11.34 4.5,11.67 4.5,12C4.5,12.33 4.53,12.65 4.57,12.97L2.46,14.63C2.27,14.78 2.21,15.05 2.34,15.27L4.34,18.73C4.46,18.95 4.73,19.03 4.95,18.95L7.44,17.94C7.96,18.34 8.5,18.68 9.13,18.93L9.5,21.58C9.54,21.82 9.75,22 10,22H14C14.25,22 14.46,21.82 14.5,21.58L14.87,18.93C15.5,18.67 16.04,18.34 16.56,17.94L19.05,18.95C19.27,19.03 19.54,18.95 19.66,18.73L21.66,15.27C21.78,15.05 21.73,14.78 21.54,14.63L19.43,12.97Z"/></svg><svg class="hplus" width="24" height="24" viewBox="0 0 24 24" fill="currentColor"><path d="M19,13H13V19H11V13H5V11H11V5H13V11H19V13Z"/></svg></div>
<div class="colbody">
<div class="card">
<div class="chead"><span class="ctitle">Opportunity V</span><span class="chip brown" style="width:59.7px;font-size:12.6px;letter-spacing:0.61px;padding-left:0.61px">10500$</span><svg class="dots" width="24" height="24" viewBox="0 0 24 24" fill="currentColor"><path d="M12,16A2,2 0 0,1 14,18A2,2 0 0,1 12,20A2,2 0 0,1 10,18A2,2 0 0,1 12,16M12,10A2,2 0 0,1 14,12A2,2 0 0,1 12,14A2,2 0 0,1 10,12A2,2 0 0,1 12,10M12,4A2,2 0 0,1 14,6A2,2 0 0,1 12,8A2,2 0 0,1 10,6A2,2 0 0,1 12,4Z"/></svg></div>
<div class="cbody"><div class="cust"><svg class="radio c-brown" width="16" height="16" viewBox="0 0 24 24" fill="currentColor"><path d="M12,20A8,8 0 0,1 4,12A8,8 0 0,1 12,4A8,8 0 0,1 20,12A8,8 0 0,1 12,20M12,2A10,10 0 0,0 2,12A10,10 0 0,0 12,22A10,10 0 0,0 22,12A10,10 0 0,0 12,2M12,7A5,5 0 0,0 7,12A5,5 0 0,0 12,17A5,5 0 0,0 17,12A5,5 0 0,0 12,7Z"/></svg><span>Customer V</span></div>
<div class="crow"><div class="stars"><svg class="st" width="16" height="16" viewBox="0 0 24 24" fill="currentColor"><path d="M12,17.27L18.18,21L16.54,13.97L22,9.24L14.81,8.62L12,2L9.19,8.62L2,9.24L7.45,13.97L5.82,21L12,17.27Z"/></svg><svg class="st" width="16" height="16" viewBox="0 0 24 24" fill="currentColor"><path d="M12,15.39L8.24,17.66L9.23,13.38L5.91,10.5L10.29,10.13L12,6.09L13.71,10.13L18.09,10.5L14.77,13.38L15.76,17.66M22,9.24L14.81,8.63L12,2L9.19,8.63L2,9.24L7.45,13.97L5.82,21L12,17.27L18.18,21L16.54,13.97L22,9.24Z"/></svg><svg class="st" width="16" height="16" viewBox="0 0 24 24" fill="currentColor"><path d="M12,15.39L8.24,17.66L9.23,13.38L5.91,10.5L10.29,10.13L12,6.09L13.71,10.13L18.09,10.5L14.77,13.38L15.76,17.66M22,9.24L14.81,8.63L12,2L9.19,8.63L2,9.24L7.45,13.97L5.82,21L12,17.27L18.18,21L16.54,13.97L22,9.24Z"/></svg><svg class="st" width="16" height="16" viewBox="0 0 24 24" fill="currentColor"><path d="M12,15.39L8.24,17.66L9.23,13.38L5.91,10.5L10.29,10.13L12,6.09L13.71,10.13L18.09,10.5L14.77,13.38L15.76,17.66M22,9.24L14.81,8.63L12,2L9.19,8.63L2,9.24L7.45,13.97L5.82,21L12,17.27L18.18,21L16.54,13.97L22,9.24Z"/></svg><svg class="st" width="16" height="16" viewBox="0 0 24 24" fill="currentColor"><path d="M12,15.39L8.24,17.66L9.23,13.38L5.91,10.5L10.29,10.13L12,6.09L13.71,10.13L18.09,10.5L14.77,13.38L15.76,17.66M22,9.24L14.81,8.63L12,2L9.19,8.63L2,9.24L7.45,13.97L5.82,21L12,17.27L18.18,21L16.54,13.97L22,9.24Z"/></svg></div><svg class="ib" width="24" height="24" viewBox="0 0 24 24" fill="currentColor"><path d="M10,21H14A2,2 0 0,1 12,23A2,2 0 0,1 10,21M21,19V20H3V19L5,17V11C5,7.9 7.03,5.17 10,4.29C10,4.19 10,4.1 10,4A2,2 0 0,1 12,2A2,2 0 0,1 14,4C14,4.1 14,4.19 14,4.29C16.97,5.17 19,7.9 19,11V17L21,19M17,11A5,5 0 0,0 12,6A5,5 0 0,0 7,11V18H17V11Z"/></svg><svg class="it" width="24" height="24" viewBox="0 0 24 24" fill="currentColor"><path d="M12,20A7,7 0 0,1 5,13A7,7 0 0,1 12,6A7,7 0 0,1 19,13A7,7 0 0,1 12,20M19.03,7.39L20.45,5.97C20,5.46 19.55,5 19.04,4.56L17.62,6C16.07,4.74 14.12,4 12,4A9,9 0 0,0 3,13A9,9 0 0,0 12,22C17,22 21,17.97 21,13C21,10.88 20.26,8.93 19.03,7.39M11,14H13V8H11M15,1H9V3H15V1Z"/></svg></div></div>
</div>
</div>
</div>
</div>
<div class="htrack"><div class="hthumb"></div></div>
</div>
</main>
</body></html>
